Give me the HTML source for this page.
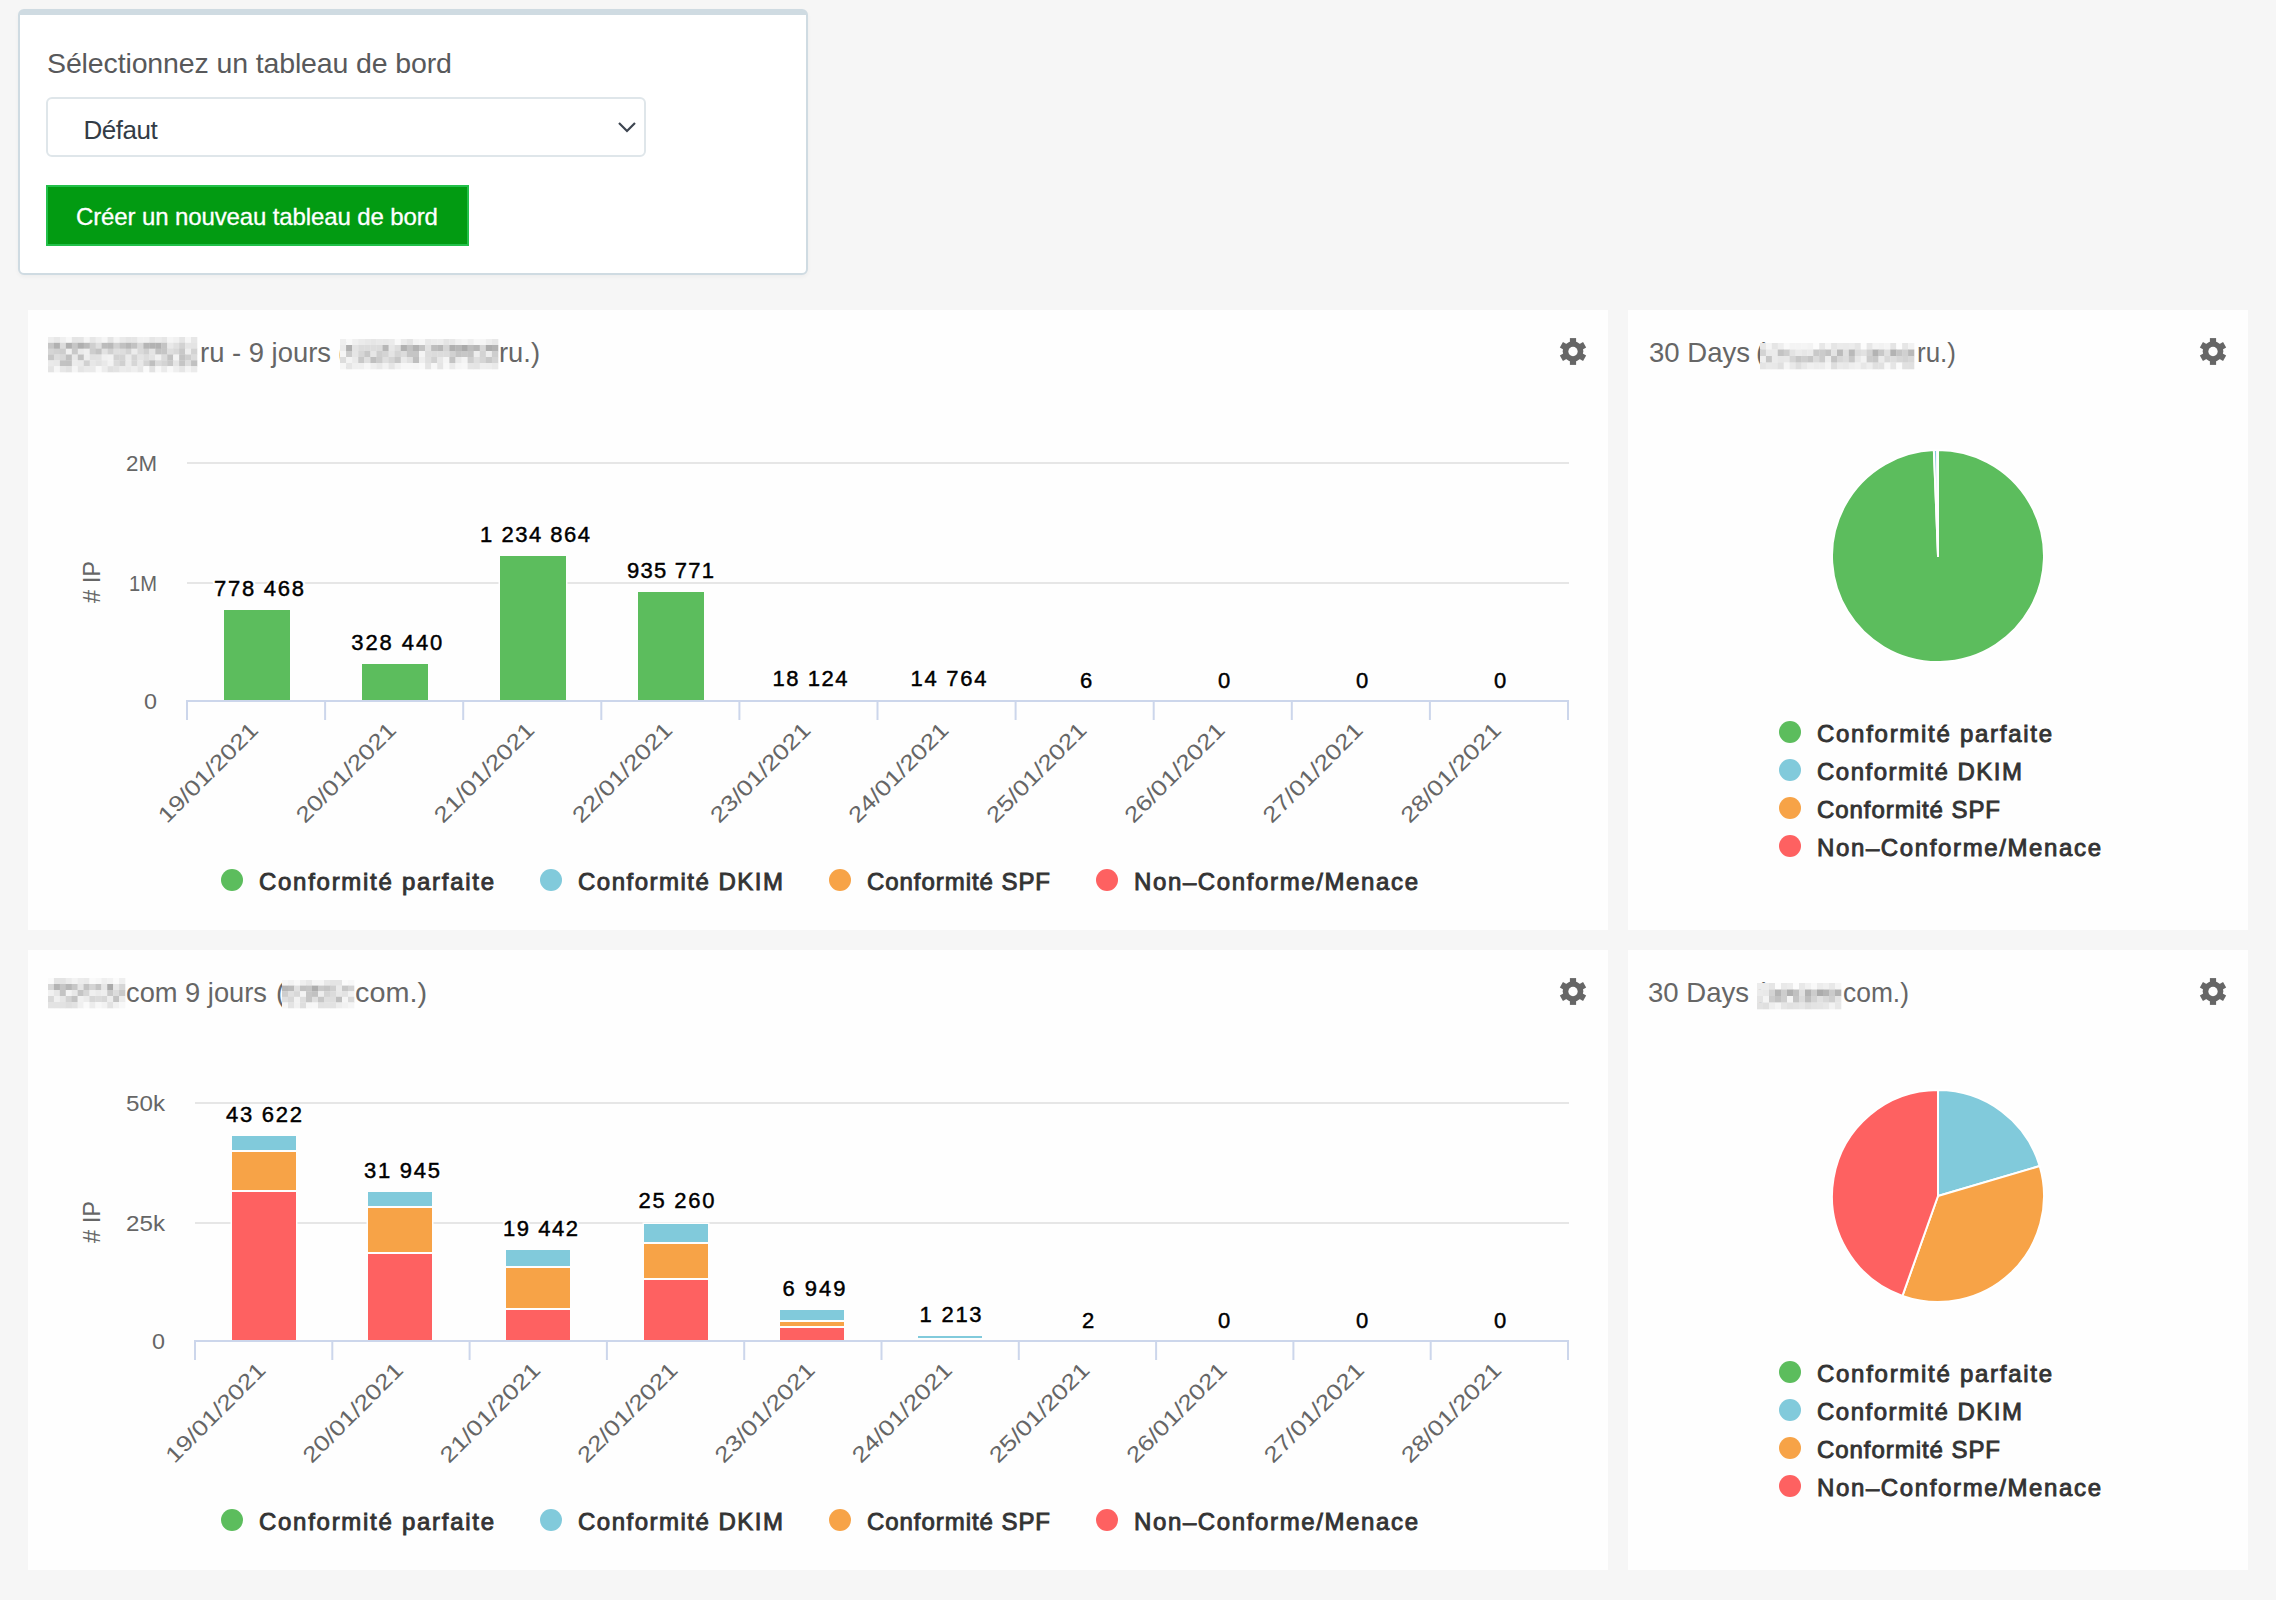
<!DOCTYPE html>
<html><head><meta charset="utf-8"><style>
html,body{margin:0;padding:0;}
body{width:2276px;height:1600px;background:#f6f6f6;position:relative;overflow:hidden;font-family:"Liberation Sans",sans-serif;}
.card{position:absolute;background:#fefefe;}
#top{position:absolute;left:18px;top:9px;width:786px;height:258px;background:#fff;border:2px solid #cfdbe2;border-top-width:6px;border-radius:6px;box-shadow:0 2px 4px rgba(0,0,0,0.04);}
#lbl{position:absolute;left:47px;top:47px;font-size:28.5px;letter-spacing:-0.13px;color:#58595b;white-space:nowrap;}
#sel{position:absolute;left:46px;top:97px;width:596px;height:56px;border:2px solid #dfe6ea;border-radius:6px;background:#fff;}
#seltxt{position:absolute;left:83.5px;top:115px;font-size:26px;letter-spacing:-0.5px;color:#333c46;white-space:nowrap;}
#btn{position:absolute;left:46px;top:185px;width:419px;height:57px;border:2px solid #23c04a;background:#029b12;}
#btntxt{position:absolute;left:76px;top:203px;font-size:24px;color:#fff;-webkit-text-stroke:0.3px #fff;letter-spacing:-0.12px;white-space:nowrap;}
svg{position:absolute;left:0;top:0;}
svg text{font-family:"Liberation Sans",sans-serif;}
</style></head><body>
<div id="top"></div>
<div id="lbl">Sélectionnez un tableau de bord</div>
<div id="sel"></div>
<div id="seltxt">Défaut</div>
<svg style="position:absolute;left:0;top:0" width="2276" height="1600"><path d="M619,123 L627,131 L635,123" fill="none" stroke="#3d4550" stroke-width="2.2"/></svg>
<div id="btn"></div>
<div id="btntxt">Créer un nouveau tableau de bord</div>
<div class="card" style="left:28px;top:310px;width:1580px;height:620px"></div>
<div class="card" style="left:1628px;top:310px;width:620px;height:620px"></div>
<div class="card" style="left:28px;top:950px;width:1580px;height:620px"></div>
<div class="card" style="left:1628px;top:950px;width:620px;height:620px"></div>
<svg width="2276" height="1600" viewBox="0 0 2276 1600">
<rect x="187.00" y="462.00" width="1382.00" height="2.00" fill="#e6e6e6"/>
<text x="157.00" y="471.00" font-size="22" fill="#666666" font-weight="400" text-anchor="end" textLength="31" lengthAdjust="spacingAndGlyphs">2M</text>
<rect x="187.00" y="582.00" width="1382.00" height="2.00" fill="#e6e6e6"/>
<text x="157.00" y="591.00" font-size="22" fill="#666666" font-weight="400" text-anchor="end" textLength="28" lengthAdjust="spacingAndGlyphs">1M</text>
<text x="157.00" y="709.00" font-size="22" fill="#666666" font-weight="400" text-anchor="end" textLength="13" lengthAdjust="spacingAndGlyphs">0</text>
<rect x="222.50" y="608.50" width="69.00" height="91.50" fill="#fefefe"/>
<rect x="224.00" y="610.00" width="66.00" height="90.00" fill="#5cbd5d"/>
<rect x="360.50" y="662.50" width="69.00" height="37.50" fill="#fefefe"/>
<rect x="362.00" y="664.00" width="66.00" height="36.00" fill="#5cbd5d"/>
<rect x="498.50" y="554.50" width="69.00" height="145.50" fill="#fefefe"/>
<rect x="500.00" y="556.00" width="66.00" height="144.00" fill="#5cbd5d"/>
<rect x="636.50" y="590.50" width="69.00" height="109.50" fill="#fefefe"/>
<rect x="638.00" y="592.00" width="66.00" height="108.00" fill="#5cbd5d"/>
<rect x="186.00" y="700.00" width="1383.00" height="2.00" fill="#ccd6eb"/>
<rect x="186.00" y="700.00" width="2.00" height="20.00" fill="#ccd6eb"/>
<rect x="324.10" y="700.00" width="2.00" height="20.00" fill="#ccd6eb"/>
<rect x="462.20" y="700.00" width="2.00" height="20.00" fill="#ccd6eb"/>
<rect x="600.30" y="700.00" width="2.00" height="20.00" fill="#ccd6eb"/>
<rect x="738.40" y="700.00" width="2.00" height="20.00" fill="#ccd6eb"/>
<rect x="876.50" y="700.00" width="2.00" height="20.00" fill="#ccd6eb"/>
<rect x="1014.60" y="700.00" width="2.00" height="20.00" fill="#ccd6eb"/>
<rect x="1152.70" y="700.00" width="2.00" height="20.00" fill="#ccd6eb"/>
<rect x="1290.80" y="700.00" width="2.00" height="20.00" fill="#ccd6eb"/>
<rect x="1428.90" y="700.00" width="2.00" height="20.00" fill="#ccd6eb"/>
<rect x="1567.00" y="700.00" width="2.00" height="20.00" fill="#ccd6eb"/>
<text x="259.00" y="595.50" font-size="22" fill="#000000" font-weight="400" text-anchor="middle" textLength="90" lengthAdjust="spacing" stroke="#ffffff" stroke-width="4.5" stroke-linejoin="round">778 468</text>
<text x="259.00" y="595.50" font-size="22" fill="#000000" font-weight="400" text-anchor="middle" textLength="90" lengthAdjust="spacing" stroke="#000000" stroke-width="0.45">778 468</text>
<text x="396.80" y="649.50" font-size="22" fill="#000000" font-weight="400" text-anchor="middle" textLength="91" lengthAdjust="spacing" stroke="#ffffff" stroke-width="4.5" stroke-linejoin="round">328 440</text>
<text x="396.80" y="649.50" font-size="22" fill="#000000" font-weight="400" text-anchor="middle" textLength="91" lengthAdjust="spacing" stroke="#000000" stroke-width="0.45">328 440</text>
<text x="535.00" y="541.50" font-size="22" fill="#000000" font-weight="400" text-anchor="middle" textLength="110" lengthAdjust="spacing" stroke="#ffffff" stroke-width="4.5" stroke-linejoin="round">1 234 864</text>
<text x="535.00" y="541.50" font-size="22" fill="#000000" font-weight="400" text-anchor="middle" textLength="110" lengthAdjust="spacing" stroke="#000000" stroke-width="0.45">1 234 864</text>
<text x="670.50" y="577.50" font-size="22" fill="#000000" font-weight="400" text-anchor="middle" textLength="87" lengthAdjust="spacing" stroke="#ffffff" stroke-width="4.5" stroke-linejoin="round">935 771</text>
<text x="670.50" y="577.50" font-size="22" fill="#000000" font-weight="400" text-anchor="middle" textLength="87" lengthAdjust="spacing" stroke="#000000" stroke-width="0.45">935 771</text>
<text x="810.00" y="686.00" font-size="22" fill="#000000" font-weight="400" text-anchor="middle" textLength="75" lengthAdjust="spacing" stroke="#ffffff" stroke-width="4.5" stroke-linejoin="round">18 124</text>
<text x="810.00" y="686.00" font-size="22" fill="#000000" font-weight="400" text-anchor="middle" textLength="75" lengthAdjust="spacing" stroke="#000000" stroke-width="0.45">18 124</text>
<text x="948.50" y="686.00" font-size="22" fill="#000000" font-weight="400" text-anchor="middle" textLength="76" lengthAdjust="spacing" stroke="#ffffff" stroke-width="4.5" stroke-linejoin="round">14 764</text>
<text x="948.50" y="686.00" font-size="22" fill="#000000" font-weight="400" text-anchor="middle" textLength="76" lengthAdjust="spacing" stroke="#000000" stroke-width="0.45">14 764</text>
<text x="1086.00" y="687.50" font-size="22" fill="#000000" font-weight="400" text-anchor="middle" textLength="12" lengthAdjust="spacing" stroke="#ffffff" stroke-width="4.5" stroke-linejoin="round">6</text>
<text x="1086.00" y="687.50" font-size="22" fill="#000000" font-weight="400" text-anchor="middle" textLength="12" lengthAdjust="spacing" stroke="#000000" stroke-width="0.45">6</text>
<text x="1224.00" y="687.50" font-size="22" fill="#000000" font-weight="400" text-anchor="middle" textLength="13" lengthAdjust="spacing" stroke="#ffffff" stroke-width="4.5" stroke-linejoin="round">0</text>
<text x="1224.00" y="687.50" font-size="22" fill="#000000" font-weight="400" text-anchor="middle" textLength="13" lengthAdjust="spacing" stroke="#000000" stroke-width="0.45">0</text>
<text x="1362.00" y="687.50" font-size="22" fill="#000000" font-weight="400" text-anchor="middle" textLength="13" lengthAdjust="spacing" stroke="#ffffff" stroke-width="4.5" stroke-linejoin="round">0</text>
<text x="1362.00" y="687.50" font-size="22" fill="#000000" font-weight="400" text-anchor="middle" textLength="13" lengthAdjust="spacing" stroke="#000000" stroke-width="0.45">0</text>
<text x="1500.00" y="687.50" font-size="22" fill="#000000" font-weight="400" text-anchor="middle" textLength="13" lengthAdjust="spacing" stroke="#ffffff" stroke-width="4.5" stroke-linejoin="round">0</text>
<text x="1500.00" y="687.50" font-size="22" fill="#000000" font-weight="400" text-anchor="middle" textLength="13" lengthAdjust="spacing" stroke="#000000" stroke-width="0.45">0</text>
<text x="0" y="0" transform="translate(259.55,731.50) rotate(-45)" font-size="22" fill="#666666" text-anchor="end" textLength="131" lengthAdjust="spacingAndGlyphs">19/01/2021</text>
<text x="0" y="0" transform="translate(397.65,731.50) rotate(-45)" font-size="22" fill="#666666" text-anchor="end" textLength="131" lengthAdjust="spacingAndGlyphs">20/01/2021</text>
<text x="0" y="0" transform="translate(535.75,731.50) rotate(-45)" font-size="22" fill="#666666" text-anchor="end" textLength="131" lengthAdjust="spacingAndGlyphs">21/01/2021</text>
<text x="0" y="0" transform="translate(673.85,731.50) rotate(-45)" font-size="22" fill="#666666" text-anchor="end" textLength="131" lengthAdjust="spacingAndGlyphs">22/01/2021</text>
<text x="0" y="0" transform="translate(811.95,731.50) rotate(-45)" font-size="22" fill="#666666" text-anchor="end" textLength="131" lengthAdjust="spacingAndGlyphs">23/01/2021</text>
<text x="0" y="0" transform="translate(950.05,731.50) rotate(-45)" font-size="22" fill="#666666" text-anchor="end" textLength="131" lengthAdjust="spacingAndGlyphs">24/01/2021</text>
<text x="0" y="0" transform="translate(1088.15,731.50) rotate(-45)" font-size="22" fill="#666666" text-anchor="end" textLength="131" lengthAdjust="spacingAndGlyphs">25/01/2021</text>
<text x="0" y="0" transform="translate(1226.25,731.50) rotate(-45)" font-size="22" fill="#666666" text-anchor="end" textLength="131" lengthAdjust="spacingAndGlyphs">26/01/2021</text>
<text x="0" y="0" transform="translate(1364.35,731.50) rotate(-45)" font-size="22" fill="#666666" text-anchor="end" textLength="131" lengthAdjust="spacingAndGlyphs">27/01/2021</text>
<text x="0" y="0" transform="translate(1502.45,731.50) rotate(-45)" font-size="22" fill="#666666" text-anchor="end" textLength="131" lengthAdjust="spacingAndGlyphs">28/01/2021</text>
<text x="0" y="0" transform="translate(100,582) rotate(-90)" font-size="24" fill="#666666" text-anchor="middle" textLength="42" lengthAdjust="spacingAndGlyphs"># IP</text>
<circle cx="232" cy="880" r="11" fill="#5cbd5d"/>
<text x="259.00" y="890.00" font-size="24" fill="#333333" font-weight="400" text-anchor="start" textLength="235" lengthAdjust="spacing" stroke="#333333" stroke-width="0.9">Conformité parfaite</text>
<circle cx="551" cy="880" r="11" fill="#81cadb"/>
<text x="578.00" y="890.00" font-size="24" fill="#333333" font-weight="400" text-anchor="start" textLength="205" lengthAdjust="spacing" stroke="#333333" stroke-width="0.9">Conformité DKIM</text>
<circle cx="840" cy="880" r="11" fill="#f7a347"/>
<text x="867.00" y="890.00" font-size="24" fill="#333333" font-weight="400" text-anchor="start" textLength="183" lengthAdjust="spacing" stroke="#333333" stroke-width="0.9">Conformité SPF</text>
<circle cx="1107" cy="880" r="11" fill="#fe6161"/>
<text x="1134.00" y="890.00" font-size="24" fill="#333333" font-weight="400" text-anchor="start" textLength="284" lengthAdjust="spacing" stroke="#333333" stroke-width="0.9">Non–Conforme/Menace</text>
<rect x="195.00" y="1102.00" width="1374.00" height="2.00" fill="#e6e6e6"/>
<text x="165.00" y="1111.00" font-size="22" fill="#666666" font-weight="400" text-anchor="end" textLength="39" lengthAdjust="spacingAndGlyphs">50k</text>
<rect x="195.00" y="1222.00" width="1374.00" height="2.00" fill="#e6e6e6"/>
<text x="165.00" y="1231.00" font-size="22" fill="#666666" font-weight="400" text-anchor="end" textLength="39" lengthAdjust="spacingAndGlyphs">25k</text>
<text x="165.00" y="1349.00" font-size="22" fill="#666666" font-weight="400" text-anchor="end" textLength="13" lengthAdjust="spacingAndGlyphs">0</text>
<rect x="230.50" y="1134.50" width="67.00" height="205.50" fill="#fefefe"/>
<rect x="232.00" y="1136.00" width="64.00" height="14.00" fill="#81cadb"/>
<rect x="232.00" y="1152.00" width="64.00" height="38.00" fill="#f7a347"/>
<rect x="232.00" y="1192.00" width="64.00" height="148.00" fill="#fe6161"/>
<rect x="366.50" y="1190.50" width="67.00" height="149.50" fill="#fefefe"/>
<rect x="368.00" y="1192.00" width="64.00" height="14.00" fill="#81cadb"/>
<rect x="368.00" y="1208.00" width="64.00" height="44.00" fill="#f7a347"/>
<rect x="368.00" y="1254.00" width="64.00" height="86.00" fill="#fe6161"/>
<rect x="504.50" y="1248.50" width="67.00" height="91.50" fill="#fefefe"/>
<rect x="506.00" y="1250.00" width="64.00" height="16.00" fill="#81cadb"/>
<rect x="506.00" y="1268.00" width="64.00" height="40.00" fill="#f7a347"/>
<rect x="506.00" y="1310.00" width="64.00" height="30.00" fill="#fe6161"/>
<rect x="642.50" y="1222.50" width="67.00" height="117.50" fill="#fefefe"/>
<rect x="644.00" y="1224.00" width="64.00" height="18.00" fill="#81cadb"/>
<rect x="644.00" y="1244.00" width="64.00" height="34.00" fill="#f7a347"/>
<rect x="644.00" y="1280.00" width="64.00" height="60.00" fill="#fe6161"/>
<rect x="778.50" y="1308.50" width="67.00" height="31.50" fill="#fefefe"/>
<rect x="780.00" y="1310.00" width="64.00" height="10.00" fill="#81cadb"/>
<rect x="780.00" y="1322.00" width="64.00" height="4.00" fill="#f7a347"/>
<rect x="780.00" y="1328.00" width="64.00" height="12.00" fill="#fe6161"/>
<rect x="916.50" y="1334.50" width="67.00" height="5.50" fill="#fefefe"/>
<rect x="918.00" y="1336.00" width="64.00" height="2.00" fill="#81cadb"/>
<rect x="194.00" y="1340.00" width="1375.00" height="2.00" fill="#ccd6eb"/>
<rect x="194.00" y="1340.00" width="2.00" height="20.00" fill="#ccd6eb"/>
<rect x="331.30" y="1340.00" width="2.00" height="20.00" fill="#ccd6eb"/>
<rect x="468.60" y="1340.00" width="2.00" height="20.00" fill="#ccd6eb"/>
<rect x="605.90" y="1340.00" width="2.00" height="20.00" fill="#ccd6eb"/>
<rect x="743.20" y="1340.00" width="2.00" height="20.00" fill="#ccd6eb"/>
<rect x="880.50" y="1340.00" width="2.00" height="20.00" fill="#ccd6eb"/>
<rect x="1017.80" y="1340.00" width="2.00" height="20.00" fill="#ccd6eb"/>
<rect x="1155.10" y="1340.00" width="2.00" height="20.00" fill="#ccd6eb"/>
<rect x="1292.40" y="1340.00" width="2.00" height="20.00" fill="#ccd6eb"/>
<rect x="1429.70" y="1340.00" width="2.00" height="20.00" fill="#ccd6eb"/>
<rect x="1567.00" y="1340.00" width="2.00" height="20.00" fill="#ccd6eb"/>
<text x="264.00" y="1122.00" font-size="22" fill="#000000" font-weight="400" text-anchor="middle" textLength="76" lengthAdjust="spacing" stroke="#ffffff" stroke-width="4.5" stroke-linejoin="round">43 622</text>
<text x="264.00" y="1122.00" font-size="22" fill="#000000" font-weight="400" text-anchor="middle" textLength="76" lengthAdjust="spacing" stroke="#000000" stroke-width="0.45">43 622</text>
<text x="402.00" y="1178.00" font-size="22" fill="#000000" font-weight="400" text-anchor="middle" textLength="76" lengthAdjust="spacing" stroke="#ffffff" stroke-width="4.5" stroke-linejoin="round">31 945</text>
<text x="402.00" y="1178.00" font-size="22" fill="#000000" font-weight="400" text-anchor="middle" textLength="76" lengthAdjust="spacing" stroke="#000000" stroke-width="0.45">31 945</text>
<text x="540.50" y="1236.00" font-size="22" fill="#000000" font-weight="400" text-anchor="middle" textLength="75" lengthAdjust="spacing" stroke="#ffffff" stroke-width="4.5" stroke-linejoin="round">19 442</text>
<text x="540.50" y="1236.00" font-size="22" fill="#000000" font-weight="400" text-anchor="middle" textLength="75" lengthAdjust="spacing" stroke="#000000" stroke-width="0.45">19 442</text>
<text x="676.50" y="1208.00" font-size="22" fill="#000000" font-weight="400" text-anchor="middle" textLength="76" lengthAdjust="spacing" stroke="#ffffff" stroke-width="4.5" stroke-linejoin="round">25 260</text>
<text x="676.50" y="1208.00" font-size="22" fill="#000000" font-weight="400" text-anchor="middle" textLength="76" lengthAdjust="spacing" stroke="#000000" stroke-width="0.45">25 260</text>
<text x="814.00" y="1295.50" font-size="22" fill="#000000" font-weight="400" text-anchor="middle" textLength="63" lengthAdjust="spacing" stroke="#ffffff" stroke-width="4.5" stroke-linejoin="round">6 949</text>
<text x="814.00" y="1295.50" font-size="22" fill="#000000" font-weight="400" text-anchor="middle" textLength="63" lengthAdjust="spacing" stroke="#000000" stroke-width="0.45">6 949</text>
<text x="950.60" y="1321.50" font-size="22" fill="#000000" font-weight="400" text-anchor="middle" textLength="62" lengthAdjust="spacing" stroke="#ffffff" stroke-width="4.5" stroke-linejoin="round">1 213</text>
<text x="950.60" y="1321.50" font-size="22" fill="#000000" font-weight="400" text-anchor="middle" textLength="62" lengthAdjust="spacing" stroke="#000000" stroke-width="0.45">1 213</text>
<text x="1088.00" y="1328.00" font-size="22" fill="#000000" font-weight="400" text-anchor="middle" textLength="13" lengthAdjust="spacing" stroke="#ffffff" stroke-width="4.5" stroke-linejoin="round">2</text>
<text x="1088.00" y="1328.00" font-size="22" fill="#000000" font-weight="400" text-anchor="middle" textLength="13" lengthAdjust="spacing" stroke="#000000" stroke-width="0.45">2</text>
<text x="1224.00" y="1328.00" font-size="22" fill="#000000" font-weight="400" text-anchor="middle" textLength="13" lengthAdjust="spacing" stroke="#ffffff" stroke-width="4.5" stroke-linejoin="round">0</text>
<text x="1224.00" y="1328.00" font-size="22" fill="#000000" font-weight="400" text-anchor="middle" textLength="13" lengthAdjust="spacing" stroke="#000000" stroke-width="0.45">0</text>
<text x="1362.00" y="1328.00" font-size="22" fill="#000000" font-weight="400" text-anchor="middle" textLength="13" lengthAdjust="spacing" stroke="#ffffff" stroke-width="4.5" stroke-linejoin="round">0</text>
<text x="1362.00" y="1328.00" font-size="22" fill="#000000" font-weight="400" text-anchor="middle" textLength="13" lengthAdjust="spacing" stroke="#000000" stroke-width="0.45">0</text>
<text x="1500.00" y="1328.00" font-size="22" fill="#000000" font-weight="400" text-anchor="middle" textLength="13" lengthAdjust="spacing" stroke="#ffffff" stroke-width="4.5" stroke-linejoin="round">0</text>
<text x="1500.00" y="1328.00" font-size="22" fill="#000000" font-weight="400" text-anchor="middle" textLength="13" lengthAdjust="spacing" stroke="#000000" stroke-width="0.45">0</text>
<text x="0" y="0" transform="translate(267.15,1371.50) rotate(-45)" font-size="22" fill="#666666" text-anchor="end" textLength="131" lengthAdjust="spacingAndGlyphs">19/01/2021</text>
<text x="0" y="0" transform="translate(404.45,1371.50) rotate(-45)" font-size="22" fill="#666666" text-anchor="end" textLength="131" lengthAdjust="spacingAndGlyphs">20/01/2021</text>
<text x="0" y="0" transform="translate(541.75,1371.50) rotate(-45)" font-size="22" fill="#666666" text-anchor="end" textLength="131" lengthAdjust="spacingAndGlyphs">21/01/2021</text>
<text x="0" y="0" transform="translate(679.05,1371.50) rotate(-45)" font-size="22" fill="#666666" text-anchor="end" textLength="131" lengthAdjust="spacingAndGlyphs">22/01/2021</text>
<text x="0" y="0" transform="translate(816.35,1371.50) rotate(-45)" font-size="22" fill="#666666" text-anchor="end" textLength="131" lengthAdjust="spacingAndGlyphs">23/01/2021</text>
<text x="0" y="0" transform="translate(953.65,1371.50) rotate(-45)" font-size="22" fill="#666666" text-anchor="end" textLength="131" lengthAdjust="spacingAndGlyphs">24/01/2021</text>
<text x="0" y="0" transform="translate(1090.95,1371.50) rotate(-45)" font-size="22" fill="#666666" text-anchor="end" textLength="131" lengthAdjust="spacingAndGlyphs">25/01/2021</text>
<text x="0" y="0" transform="translate(1228.25,1371.50) rotate(-45)" font-size="22" fill="#666666" text-anchor="end" textLength="131" lengthAdjust="spacingAndGlyphs">26/01/2021</text>
<text x="0" y="0" transform="translate(1365.55,1371.50) rotate(-45)" font-size="22" fill="#666666" text-anchor="end" textLength="131" lengthAdjust="spacingAndGlyphs">27/01/2021</text>
<text x="0" y="0" transform="translate(1502.85,1371.50) rotate(-45)" font-size="22" fill="#666666" text-anchor="end" textLength="131" lengthAdjust="spacingAndGlyphs">28/01/2021</text>
<text x="0" y="0" transform="translate(100,1222) rotate(-90)" font-size="24" fill="#666666" text-anchor="middle" textLength="42" lengthAdjust="spacingAndGlyphs"># IP</text>
<circle cx="232" cy="1520" r="11" fill="#5cbd5d"/>
<text x="259.00" y="1530.00" font-size="24" fill="#333333" font-weight="400" text-anchor="start" textLength="235" lengthAdjust="spacing" stroke="#333333" stroke-width="0.9">Conformité parfaite</text>
<circle cx="551" cy="1520" r="11" fill="#81cadb"/>
<text x="578.00" y="1530.00" font-size="24" fill="#333333" font-weight="400" text-anchor="start" textLength="205" lengthAdjust="spacing" stroke="#333333" stroke-width="0.9">Conformité DKIM</text>
<circle cx="840" cy="1520" r="11" fill="#f7a347"/>
<text x="867.00" y="1530.00" font-size="24" fill="#333333" font-weight="400" text-anchor="start" textLength="183" lengthAdjust="spacing" stroke="#333333" stroke-width="0.9">Conformité SPF</text>
<circle cx="1107" cy="1520" r="11" fill="#fe6161"/>
<text x="1134.00" y="1530.00" font-size="24" fill="#333333" font-weight="400" text-anchor="start" textLength="284" lengthAdjust="spacing" stroke="#333333" stroke-width="0.9">Non–Conforme/Menace</text>
<path d="M1938,556 L1938.00,450.00 A106,106 0 1 1 1933.87,450.08 Z" fill="#5cbd5d" stroke="#ffffff" stroke-width="2" stroke-linejoin="round"/>
<path d="M1938,556 L1933.87,450.08 A106,106 0 0 1 1937.33,450.00 Z" fill="#81cadb" stroke="#ffffff" stroke-width="2" stroke-linejoin="round"/>
<path d="M1938,556 L1937.33,450.00 A106,106 0 0 1 1937.67,450.00 Z" fill="#f7a347" stroke="#ffffff" stroke-width="2" stroke-linejoin="round"/>
<path d="M1938,556 L1937.67,450.00 A106,106 0 0 1 1938.00,450.00 Z" fill="#fe6161" stroke="#ffffff" stroke-width="2" stroke-linejoin="round"/>
<path d="M1938,1196 L1938.00,1090.00 A106,106 0 0 1 2039.69,1166.07 Z" fill="#81cadb" stroke="#ffffff" stroke-width="2" stroke-linejoin="round"/>
<path d="M1938,1196 L2039.69,1166.07 A106,106 0 0 1 1902.44,1295.86 Z" fill="#f7a347" stroke="#ffffff" stroke-width="2" stroke-linejoin="round"/>
<path d="M1938,1196 L1902.44,1295.86 A106,106 0 0 1 1938.00,1090.00 Z" fill="#fe6161" stroke="#ffffff" stroke-width="2" stroke-linejoin="round"/>
<circle cx="1790" cy="732" r="11" fill="#5cbd5d"/>
<text x="1817.00" y="742.00" font-size="24" fill="#333333" font-weight="400" text-anchor="start" textLength="235" lengthAdjust="spacing" stroke="#333333" stroke-width="0.9">Conformité parfaite</text>
<circle cx="1790" cy="770" r="11" fill="#81cadb"/>
<text x="1817.00" y="780.00" font-size="24" fill="#333333" font-weight="400" text-anchor="start" textLength="205" lengthAdjust="spacing" stroke="#333333" stroke-width="0.9">Conformité DKIM</text>
<circle cx="1790" cy="808" r="11" fill="#f7a347"/>
<text x="1817.00" y="818.00" font-size="24" fill="#333333" font-weight="400" text-anchor="start" textLength="183" lengthAdjust="spacing" stroke="#333333" stroke-width="0.9">Conformité SPF</text>
<circle cx="1790" cy="846" r="11" fill="#fe6161"/>
<text x="1817.00" y="856.00" font-size="24" fill="#333333" font-weight="400" text-anchor="start" textLength="284" lengthAdjust="spacing" stroke="#333333" stroke-width="0.9">Non–Conforme/Menace</text>
<circle cx="1790" cy="1372" r="11" fill="#5cbd5d"/>
<text x="1817.00" y="1382.00" font-size="24" fill="#333333" font-weight="400" text-anchor="start" textLength="235" lengthAdjust="spacing" stroke="#333333" stroke-width="0.9">Conformité parfaite</text>
<circle cx="1790" cy="1410" r="11" fill="#81cadb"/>
<text x="1817.00" y="1420.00" font-size="24" fill="#333333" font-weight="400" text-anchor="start" textLength="205" lengthAdjust="spacing" stroke="#333333" stroke-width="0.9">Conformité DKIM</text>
<circle cx="1790" cy="1448" r="11" fill="#f7a347"/>
<text x="1817.00" y="1458.00" font-size="24" fill="#333333" font-weight="400" text-anchor="start" textLength="183" lengthAdjust="spacing" stroke="#333333" stroke-width="0.9">Conformité SPF</text>
<circle cx="1790" cy="1486" r="11" fill="#fe6161"/>
<text x="1817.00" y="1496.00" font-size="24" fill="#333333" font-weight="400" text-anchor="start" textLength="284" lengthAdjust="spacing" stroke="#333333" stroke-width="0.9">Non–Conforme/Menace</text>
<g><circle cx="1573" cy="351.5" r="10.3" fill="#666"/><rect x="1569.90" y="338.10" width="6.2" height="13.4" fill="#666" transform="rotate(0,1573,351.5)"/><rect x="1569.90" y="338.10" width="6.2" height="13.4" fill="#666" transform="rotate(60,1573,351.5)"/><rect x="1569.90" y="338.10" width="6.2" height="13.4" fill="#666" transform="rotate(120,1573,351.5)"/><rect x="1569.90" y="338.10" width="6.2" height="13.4" fill="#666" transform="rotate(180,1573,351.5)"/><rect x="1569.90" y="338.10" width="6.2" height="13.4" fill="#666" transform="rotate(240,1573,351.5)"/><rect x="1569.90" y="338.10" width="6.2" height="13.4" fill="#666" transform="rotate(300,1573,351.5)"/><circle cx="1573" cy="351.5" r="4.65" fill="#fefefe"/></g>
<g><circle cx="2213" cy="351.5" r="10.3" fill="#666"/><rect x="2209.90" y="338.10" width="6.2" height="13.4" fill="#666" transform="rotate(0,2213,351.5)"/><rect x="2209.90" y="338.10" width="6.2" height="13.4" fill="#666" transform="rotate(60,2213,351.5)"/><rect x="2209.90" y="338.10" width="6.2" height="13.4" fill="#666" transform="rotate(120,2213,351.5)"/><rect x="2209.90" y="338.10" width="6.2" height="13.4" fill="#666" transform="rotate(180,2213,351.5)"/><rect x="2209.90" y="338.10" width="6.2" height="13.4" fill="#666" transform="rotate(240,2213,351.5)"/><rect x="2209.90" y="338.10" width="6.2" height="13.4" fill="#666" transform="rotate(300,2213,351.5)"/><circle cx="2213" cy="351.5" r="4.65" fill="#fefefe"/></g>
<g><circle cx="1573" cy="991.5" r="10.3" fill="#666"/><rect x="1569.90" y="978.10" width="6.2" height="13.4" fill="#666" transform="rotate(0,1573,991.5)"/><rect x="1569.90" y="978.10" width="6.2" height="13.4" fill="#666" transform="rotate(60,1573,991.5)"/><rect x="1569.90" y="978.10" width="6.2" height="13.4" fill="#666" transform="rotate(120,1573,991.5)"/><rect x="1569.90" y="978.10" width="6.2" height="13.4" fill="#666" transform="rotate(180,1573,991.5)"/><rect x="1569.90" y="978.10" width="6.2" height="13.4" fill="#666" transform="rotate(240,1573,991.5)"/><rect x="1569.90" y="978.10" width="6.2" height="13.4" fill="#666" transform="rotate(300,1573,991.5)"/><circle cx="1573" cy="991.5" r="4.65" fill="#fefefe"/></g>
<g><circle cx="2213" cy="991.5" r="10.3" fill="#666"/><rect x="2209.90" y="978.10" width="6.2" height="13.4" fill="#666" transform="rotate(0,2213,991.5)"/><rect x="2209.90" y="978.10" width="6.2" height="13.4" fill="#666" transform="rotate(60,2213,991.5)"/><rect x="2209.90" y="978.10" width="6.2" height="13.4" fill="#666" transform="rotate(120,2213,991.5)"/><rect x="2209.90" y="978.10" width="6.2" height="13.4" fill="#666" transform="rotate(180,2213,991.5)"/><rect x="2209.90" y="978.10" width="6.2" height="13.4" fill="#666" transform="rotate(240,2213,991.5)"/><rect x="2209.90" y="978.10" width="6.2" height="13.4" fill="#666" transform="rotate(300,2213,991.5)"/><circle cx="2213" cy="991.5" r="4.65" fill="#fefefe"/></g>
<rect x="48.00" y="337.00" width="6.26" height="6.13" fill="rgb(238,238,238)"/>
<rect x="53.96" y="337.00" width="6.26" height="6.13" fill="rgb(232,232,232)"/>
<rect x="59.92" y="337.00" width="6.26" height="6.13" fill="rgb(240,240,240)"/>
<rect x="65.88" y="337.00" width="6.26" height="6.13" fill="rgb(248,248,248)"/>
<rect x="71.84" y="337.00" width="6.26" height="6.13" fill="rgb(229,229,229)"/>
<rect x="77.80" y="337.00" width="6.26" height="6.13" fill="rgb(230,230,230)"/>
<rect x="83.76" y="337.00" width="6.26" height="6.13" fill="rgb(245,245,245)"/>
<rect x="89.72" y="337.00" width="6.26" height="6.13" fill="rgb(231,231,231)"/>
<rect x="95.68" y="337.00" width="6.26" height="6.13" fill="rgb(239,239,239)"/>
<rect x="101.64" y="337.00" width="6.26" height="6.13" fill="rgb(246,246,246)"/>
<rect x="107.60" y="337.00" width="6.26" height="6.13" fill="rgb(229,229,229)"/>
<rect x="113.56" y="337.00" width="6.26" height="6.13" fill="rgb(244,244,244)"/>
<rect x="119.52" y="337.00" width="6.26" height="6.13" fill="rgb(234,234,234)"/>
<rect x="125.48" y="337.00" width="6.26" height="6.13" fill="rgb(229,229,229)"/>
<rect x="131.44" y="337.00" width="6.26" height="6.13" fill="rgb(230,230,230)"/>
<rect x="137.40" y="337.00" width="6.26" height="6.13" fill="rgb(241,241,241)"/>
<rect x="143.36" y="337.00" width="6.26" height="6.13" fill="rgb(241,241,241)"/>
<rect x="149.32" y="337.00" width="6.26" height="6.13" fill="rgb(230,230,230)"/>
<rect x="155.28" y="337.00" width="6.26" height="6.13" fill="rgb(235,235,235)"/>
<rect x="161.24" y="337.00" width="6.26" height="6.13" fill="rgb(230,230,230)"/>
<rect x="167.20" y="337.00" width="6.26" height="6.13" fill="rgb(245,245,245)"/>
<rect x="173.16" y="337.00" width="6.26" height="6.13" fill="rgb(241,241,241)"/>
<rect x="179.12" y="337.00" width="6.26" height="6.13" fill="rgb(229,229,229)"/>
<rect x="185.08" y="337.00" width="6.26" height="6.13" fill="rgb(246,246,246)"/>
<rect x="191.04" y="337.00" width="6.26" height="6.13" fill="rgb(231,231,231)"/>
<rect x="48.00" y="342.83" width="6.26" height="6.13" fill="rgb(198,198,198)"/>
<rect x="53.96" y="342.83" width="6.26" height="6.13" fill="rgb(177,177,177)"/>
<rect x="59.92" y="342.83" width="6.26" height="6.13" fill="rgb(220,220,220)"/>
<rect x="65.88" y="342.83" width="6.26" height="6.13" fill="rgb(176,176,176)"/>
<rect x="71.84" y="342.83" width="6.26" height="6.13" fill="rgb(198,198,198)"/>
<rect x="77.80" y="342.83" width="6.26" height="6.13" fill="rgb(175,175,175)"/>
<rect x="83.76" y="342.83" width="6.26" height="6.13" fill="rgb(187,187,187)"/>
<rect x="89.72" y="342.83" width="6.26" height="6.13" fill="rgb(207,207,207)"/>
<rect x="95.68" y="342.83" width="6.26" height="6.13" fill="rgb(223,223,223)"/>
<rect x="101.64" y="342.83" width="6.26" height="6.13" fill="rgb(188,188,188)"/>
<rect x="107.60" y="342.83" width="6.26" height="6.13" fill="rgb(185,185,185)"/>
<rect x="113.56" y="342.83" width="6.26" height="6.13" fill="rgb(209,209,209)"/>
<rect x="119.52" y="342.83" width="6.26" height="6.13" fill="rgb(193,193,193)"/>
<rect x="125.48" y="342.83" width="6.26" height="6.13" fill="rgb(183,183,183)"/>
<rect x="131.44" y="342.83" width="6.26" height="6.13" fill="rgb(194,194,194)"/>
<rect x="137.40" y="342.83" width="6.26" height="6.13" fill="rgb(217,217,217)"/>
<rect x="143.36" y="342.83" width="6.26" height="6.13" fill="rgb(182,182,182)"/>
<rect x="149.32" y="342.83" width="6.26" height="6.13" fill="rgb(178,178,178)"/>
<rect x="155.28" y="342.83" width="6.26" height="6.13" fill="rgb(177,177,177)"/>
<rect x="161.24" y="342.83" width="6.26" height="6.13" fill="rgb(196,196,196)"/>
<rect x="167.20" y="342.83" width="6.26" height="6.13" fill="rgb(233,233,233)"/>
<rect x="173.16" y="342.83" width="6.26" height="6.13" fill="rgb(224,224,224)"/>
<rect x="179.12" y="342.83" width="6.26" height="6.13" fill="rgb(210,210,210)"/>
<rect x="185.08" y="342.83" width="6.26" height="6.13" fill="rgb(229,229,229)"/>
<rect x="191.04" y="342.83" width="6.26" height="6.13" fill="rgb(228,228,228)"/>
<rect x="48.00" y="348.67" width="6.26" height="6.13" fill="rgb(213,213,213)"/>
<rect x="53.96" y="348.67" width="6.26" height="6.13" fill="rgb(209,209,209)"/>
<rect x="59.92" y="348.67" width="6.26" height="6.13" fill="rgb(205,205,205)"/>
<rect x="65.88" y="348.67" width="6.26" height="6.13" fill="rgb(240,240,240)"/>
<rect x="71.84" y="348.67" width="6.26" height="6.13" fill="rgb(201,201,201)"/>
<rect x="77.80" y="348.67" width="6.26" height="6.13" fill="rgb(234,234,234)"/>
<rect x="83.76" y="348.67" width="6.26" height="6.13" fill="rgb(239,239,239)"/>
<rect x="89.72" y="348.67" width="6.26" height="6.13" fill="rgb(205,205,205)"/>
<rect x="95.68" y="348.67" width="6.26" height="6.13" fill="rgb(195,195,195)"/>
<rect x="101.64" y="348.67" width="6.26" height="6.13" fill="rgb(226,226,226)"/>
<rect x="107.60" y="348.67" width="6.26" height="6.13" fill="rgb(209,209,209)"/>
<rect x="113.56" y="348.67" width="6.26" height="6.13" fill="rgb(223,223,223)"/>
<rect x="119.52" y="348.67" width="6.26" height="6.13" fill="rgb(221,221,221)"/>
<rect x="125.48" y="348.67" width="6.26" height="6.13" fill="rgb(211,211,211)"/>
<rect x="131.44" y="348.67" width="6.26" height="6.13" fill="rgb(236,236,236)"/>
<rect x="137.40" y="348.67" width="6.26" height="6.13" fill="rgb(218,218,218)"/>
<rect x="143.36" y="348.67" width="6.26" height="6.13" fill="rgb(208,208,208)"/>
<rect x="149.32" y="348.67" width="6.26" height="6.13" fill="rgb(228,228,228)"/>
<rect x="155.28" y="348.67" width="6.26" height="6.13" fill="rgb(194,194,194)"/>
<rect x="161.24" y="348.67" width="6.26" height="6.13" fill="rgb(197,197,197)"/>
<rect x="167.20" y="348.67" width="6.26" height="6.13" fill="rgb(222,222,222)"/>
<rect x="173.16" y="348.67" width="6.26" height="6.13" fill="rgb(216,216,216)"/>
<rect x="179.12" y="348.67" width="6.26" height="6.13" fill="rgb(200,200,200)"/>
<rect x="185.08" y="348.67" width="6.26" height="6.13" fill="rgb(238,238,238)"/>
<rect x="191.04" y="348.67" width="6.26" height="6.13" fill="rgb(211,211,211)"/>
<rect x="48.00" y="354.50" width="6.26" height="6.13" fill="rgb(199,199,199)"/>
<rect x="53.96" y="354.50" width="6.26" height="6.13" fill="rgb(221,221,221)"/>
<rect x="59.92" y="354.50" width="6.26" height="6.13" fill="rgb(216,216,216)"/>
<rect x="65.88" y="354.50" width="6.26" height="6.13" fill="rgb(192,192,192)"/>
<rect x="71.84" y="354.50" width="6.26" height="6.13" fill="rgb(232,232,232)"/>
<rect x="77.80" y="354.50" width="6.26" height="6.13" fill="rgb(194,194,194)"/>
<rect x="83.76" y="354.50" width="6.26" height="6.13" fill="rgb(238,238,238)"/>
<rect x="89.72" y="354.50" width="6.26" height="6.13" fill="rgb(225,225,225)"/>
<rect x="95.68" y="354.50" width="6.26" height="6.13" fill="rgb(226,226,226)"/>
<rect x="101.64" y="354.50" width="6.26" height="6.13" fill="rgb(240,240,240)"/>
<rect x="107.60" y="354.50" width="6.26" height="6.13" fill="rgb(242,242,242)"/>
<rect x="113.56" y="354.50" width="6.26" height="6.13" fill="rgb(210,210,210)"/>
<rect x="119.52" y="354.50" width="6.26" height="6.13" fill="rgb(211,211,211)"/>
<rect x="125.48" y="354.50" width="6.26" height="6.13" fill="rgb(234,234,234)"/>
<rect x="131.44" y="354.50" width="6.26" height="6.13" fill="rgb(212,212,212)"/>
<rect x="137.40" y="354.50" width="6.26" height="6.13" fill="rgb(228,228,228)"/>
<rect x="143.36" y="354.50" width="6.26" height="6.13" fill="rgb(221,221,221)"/>
<rect x="149.32" y="354.50" width="6.26" height="6.13" fill="rgb(227,227,227)"/>
<rect x="155.28" y="354.50" width="6.26" height="6.13" fill="rgb(241,241,241)"/>
<rect x="161.24" y="354.50" width="6.26" height="6.13" fill="rgb(219,219,219)"/>
<rect x="167.20" y="354.50" width="6.26" height="6.13" fill="rgb(194,194,194)"/>
<rect x="173.16" y="354.50" width="6.26" height="6.13" fill="rgb(243,243,243)"/>
<rect x="179.12" y="354.50" width="6.26" height="6.13" fill="rgb(195,195,195)"/>
<rect x="185.08" y="354.50" width="6.26" height="6.13" fill="rgb(207,207,207)"/>
<rect x="191.04" y="354.50" width="6.26" height="6.13" fill="rgb(220,220,220)"/>
<rect x="48.00" y="360.33" width="6.26" height="6.13" fill="rgb(234,234,234)"/>
<rect x="53.96" y="360.33" width="6.26" height="6.13" fill="rgb(232,232,232)"/>
<rect x="59.92" y="360.33" width="6.26" height="6.13" fill="rgb(194,194,194)"/>
<rect x="65.88" y="360.33" width="6.26" height="6.13" fill="rgb(193,193,193)"/>
<rect x="71.84" y="360.33" width="6.26" height="6.13" fill="rgb(236,236,236)"/>
<rect x="77.80" y="360.33" width="6.26" height="6.13" fill="rgb(234,234,234)"/>
<rect x="83.76" y="360.33" width="6.26" height="6.13" fill="rgb(209,209,209)"/>
<rect x="89.72" y="360.33" width="6.26" height="6.13" fill="rgb(231,231,231)"/>
<rect x="95.68" y="360.33" width="6.26" height="6.13" fill="rgb(226,226,226)"/>
<rect x="101.64" y="360.33" width="6.26" height="6.13" fill="rgb(233,233,233)"/>
<rect x="107.60" y="360.33" width="6.26" height="6.13" fill="rgb(242,242,242)"/>
<rect x="113.56" y="360.33" width="6.26" height="6.13" fill="rgb(218,218,218)"/>
<rect x="119.52" y="360.33" width="6.26" height="6.13" fill="rgb(208,208,208)"/>
<rect x="125.48" y="360.33" width="6.26" height="6.13" fill="rgb(235,235,235)"/>
<rect x="131.44" y="360.33" width="6.26" height="6.13" fill="rgb(214,214,214)"/>
<rect x="137.40" y="360.33" width="6.26" height="6.13" fill="rgb(232,232,232)"/>
<rect x="143.36" y="360.33" width="6.26" height="6.13" fill="rgb(212,212,212)"/>
<rect x="149.32" y="360.33" width="6.26" height="6.13" fill="rgb(191,191,191)"/>
<rect x="155.28" y="360.33" width="6.26" height="6.13" fill="rgb(219,219,219)"/>
<rect x="161.24" y="360.33" width="6.26" height="6.13" fill="rgb(212,212,212)"/>
<rect x="167.20" y="360.33" width="6.26" height="6.13" fill="rgb(200,200,200)"/>
<rect x="173.16" y="360.33" width="6.26" height="6.13" fill="rgb(229,229,229)"/>
<rect x="179.12" y="360.33" width="6.26" height="6.13" fill="rgb(197,197,197)"/>
<rect x="185.08" y="360.33" width="6.26" height="6.13" fill="rgb(221,221,221)"/>
<rect x="191.04" y="360.33" width="6.26" height="6.13" fill="rgb(193,193,193)"/>
<rect x="48.00" y="366.17" width="6.26" height="6.13" fill="rgb(228,228,228)"/>
<rect x="53.96" y="366.17" width="6.26" height="6.13" fill="rgb(246,246,246)"/>
<rect x="59.92" y="366.17" width="6.26" height="6.13" fill="rgb(231,231,231)"/>
<rect x="65.88" y="366.17" width="6.26" height="6.13" fill="rgb(226,226,226)"/>
<rect x="71.84" y="366.17" width="6.26" height="6.13" fill="rgb(245,245,245)"/>
<rect x="77.80" y="366.17" width="6.26" height="6.13" fill="rgb(229,229,229)"/>
<rect x="83.76" y="366.17" width="6.26" height="6.13" fill="rgb(234,234,234)"/>
<rect x="89.72" y="366.17" width="6.26" height="6.13" fill="rgb(234,234,234)"/>
<rect x="95.68" y="366.17" width="6.26" height="6.13" fill="rgb(249,249,249)"/>
<rect x="101.64" y="366.17" width="6.26" height="6.13" fill="rgb(237,237,237)"/>
<rect x="107.60" y="366.17" width="6.26" height="6.13" fill="rgb(224,224,224)"/>
<rect x="113.56" y="366.17" width="6.26" height="6.13" fill="rgb(227,227,227)"/>
<rect x="119.52" y="366.17" width="6.26" height="6.13" fill="rgb(236,236,236)"/>
<rect x="125.48" y="366.17" width="6.26" height="6.13" fill="rgb(234,234,234)"/>
<rect x="131.44" y="366.17" width="6.26" height="6.13" fill="rgb(239,239,239)"/>
<rect x="137.40" y="366.17" width="6.26" height="6.13" fill="rgb(230,230,230)"/>
<rect x="143.36" y="366.17" width="6.26" height="6.13" fill="rgb(250,250,250)"/>
<rect x="149.32" y="366.17" width="6.26" height="6.13" fill="rgb(226,226,226)"/>
<rect x="155.28" y="366.17" width="6.26" height="6.13" fill="rgb(248,248,248)"/>
<rect x="161.24" y="366.17" width="6.26" height="6.13" fill="rgb(235,235,235)"/>
<rect x="167.20" y="366.17" width="6.26" height="6.13" fill="rgb(249,249,249)"/>
<rect x="173.16" y="366.17" width="6.26" height="6.13" fill="rgb(239,239,239)"/>
<rect x="179.12" y="366.17" width="6.26" height="6.13" fill="rgb(230,230,230)"/>
<rect x="185.08" y="366.17" width="6.26" height="6.13" fill="rgb(244,244,244)"/>
<rect x="191.04" y="366.17" width="6.26" height="6.13" fill="rgb(235,235,235)"/>
<text x="200.00" y="362.00" font-size="28" fill="#666666" font-weight="400" text-anchor="start" textLength="131" lengthAdjust="spacingAndGlyphs" font-family="Liberation Sans">ru - 9 jours</text>
<text x="338.00" y="362.00" font-size="28" fill="#666666" font-weight="400" text-anchor="start" font-family="Liberation Sans">(</text>
<rect x="340.00" y="339.00" width="6.38" height="6.30" fill="rgb(239,239,239)"/>
<rect x="346.08" y="339.00" width="6.38" height="6.30" fill="rgb(249,249,249)"/>
<rect x="352.15" y="339.00" width="6.38" height="6.30" fill="rgb(240,240,240)"/>
<rect x="358.23" y="339.00" width="6.38" height="6.30" fill="rgb(235,235,235)"/>
<rect x="364.31" y="339.00" width="6.38" height="6.30" fill="rgb(232,232,232)"/>
<rect x="370.38" y="339.00" width="6.38" height="6.30" fill="rgb(230,230,230)"/>
<rect x="376.46" y="339.00" width="6.38" height="6.30" fill="rgb(233,233,233)"/>
<rect x="382.54" y="339.00" width="6.38" height="6.30" fill="rgb(232,232,232)"/>
<rect x="388.62" y="339.00" width="6.38" height="6.30" fill="rgb(235,235,235)"/>
<rect x="394.69" y="339.00" width="6.38" height="6.30" fill="rgb(249,249,249)"/>
<rect x="400.77" y="339.00" width="6.38" height="6.30" fill="rgb(235,235,235)"/>
<rect x="406.85" y="339.00" width="6.38" height="6.30" fill="rgb(228,228,228)"/>
<rect x="412.92" y="339.00" width="6.38" height="6.30" fill="rgb(243,243,243)"/>
<rect x="419.00" y="339.00" width="6.38" height="6.30" fill="rgb(246,246,246)"/>
<rect x="425.08" y="339.00" width="6.38" height="6.30" fill="rgb(233,233,233)"/>
<rect x="431.15" y="339.00" width="6.38" height="6.30" fill="rgb(236,236,236)"/>
<rect x="437.23" y="339.00" width="6.38" height="6.30" fill="rgb(237,237,237)"/>
<rect x="443.31" y="339.00" width="6.38" height="6.30" fill="rgb(228,228,228)"/>
<rect x="449.38" y="339.00" width="6.38" height="6.30" fill="rgb(232,232,232)"/>
<rect x="455.46" y="339.00" width="6.38" height="6.30" fill="rgb(241,241,241)"/>
<rect x="461.54" y="339.00" width="6.38" height="6.30" fill="rgb(245,245,245)"/>
<rect x="467.62" y="339.00" width="6.38" height="6.30" fill="rgb(239,239,239)"/>
<rect x="473.69" y="339.00" width="6.38" height="6.30" fill="rgb(247,247,247)"/>
<rect x="479.77" y="339.00" width="6.38" height="6.30" fill="rgb(246,246,246)"/>
<rect x="485.85" y="339.00" width="6.38" height="6.30" fill="rgb(238,238,238)"/>
<rect x="491.92" y="339.00" width="6.38" height="6.30" fill="rgb(232,232,232)"/>
<rect x="340.00" y="345.00" width="6.38" height="6.30" fill="rgb(235,235,235)"/>
<rect x="346.08" y="345.00" width="6.38" height="6.30" fill="rgb(176,176,176)"/>
<rect x="352.15" y="345.00" width="6.38" height="6.30" fill="rgb(228,228,228)"/>
<rect x="358.23" y="345.00" width="6.38" height="6.30" fill="rgb(220,220,220)"/>
<rect x="364.31" y="345.00" width="6.38" height="6.30" fill="rgb(220,220,220)"/>
<rect x="370.38" y="345.00" width="6.38" height="6.30" fill="rgb(221,221,221)"/>
<rect x="376.46" y="345.00" width="6.38" height="6.30" fill="rgb(220,220,220)"/>
<rect x="382.54" y="345.00" width="6.38" height="6.30" fill="rgb(183,183,183)"/>
<rect x="388.62" y="345.00" width="6.38" height="6.30" fill="rgb(231,231,231)"/>
<rect x="394.69" y="345.00" width="6.38" height="6.30" fill="rgb(221,221,221)"/>
<rect x="400.77" y="345.00" width="6.38" height="6.30" fill="rgb(177,177,177)"/>
<rect x="406.85" y="345.00" width="6.38" height="6.30" fill="rgb(194,194,194)"/>
<rect x="412.92" y="345.00" width="6.38" height="6.30" fill="rgb(178,178,178)"/>
<rect x="419.00" y="345.00" width="6.38" height="6.30" fill="rgb(196,196,196)"/>
<rect x="425.08" y="345.00" width="6.38" height="6.30" fill="rgb(226,226,226)"/>
<rect x="431.15" y="345.00" width="6.38" height="6.30" fill="rgb(190,190,190)"/>
<rect x="437.23" y="345.00" width="6.38" height="6.30" fill="rgb(184,184,184)"/>
<rect x="443.31" y="345.00" width="6.38" height="6.30" fill="rgb(213,213,213)"/>
<rect x="449.38" y="345.00" width="6.38" height="6.30" fill="rgb(176,176,176)"/>
<rect x="455.46" y="345.00" width="6.38" height="6.30" fill="rgb(183,183,183)"/>
<rect x="461.54" y="345.00" width="6.38" height="6.30" fill="rgb(170,170,170)"/>
<rect x="467.62" y="345.00" width="6.38" height="6.30" fill="rgb(189,189,189)"/>
<rect x="473.69" y="345.00" width="6.38" height="6.30" fill="rgb(182,182,182)"/>
<rect x="479.77" y="345.00" width="6.38" height="6.30" fill="rgb(216,216,216)"/>
<rect x="485.85" y="345.00" width="6.38" height="6.30" fill="rgb(173,173,173)"/>
<rect x="491.92" y="345.00" width="6.38" height="6.30" fill="rgb(179,179,179)"/>
<rect x="340.00" y="351.00" width="6.38" height="6.30" fill="rgb(245,245,245)"/>
<rect x="346.08" y="351.00" width="6.38" height="6.30" fill="rgb(203,203,203)"/>
<rect x="352.15" y="351.00" width="6.38" height="6.30" fill="rgb(229,229,229)"/>
<rect x="358.23" y="351.00" width="6.38" height="6.30" fill="rgb(214,214,214)"/>
<rect x="364.31" y="351.00" width="6.38" height="6.30" fill="rgb(199,199,199)"/>
<rect x="370.38" y="351.00" width="6.38" height="6.30" fill="rgb(230,230,230)"/>
<rect x="376.46" y="351.00" width="6.38" height="6.30" fill="rgb(206,206,206)"/>
<rect x="382.54" y="351.00" width="6.38" height="6.30" fill="rgb(212,212,212)"/>
<rect x="388.62" y="351.00" width="6.38" height="6.30" fill="rgb(228,228,228)"/>
<rect x="394.69" y="351.00" width="6.38" height="6.30" fill="rgb(213,213,213)"/>
<rect x="400.77" y="351.00" width="6.38" height="6.30" fill="rgb(220,220,220)"/>
<rect x="406.85" y="351.00" width="6.38" height="6.30" fill="rgb(197,197,197)"/>
<rect x="412.92" y="351.00" width="6.38" height="6.30" fill="rgb(197,197,197)"/>
<rect x="419.00" y="351.00" width="6.38" height="6.30" fill="rgb(244,244,244)"/>
<rect x="425.08" y="351.00" width="6.38" height="6.30" fill="rgb(221,221,221)"/>
<rect x="431.15" y="351.00" width="6.38" height="6.30" fill="rgb(219,219,219)"/>
<rect x="437.23" y="351.00" width="6.38" height="6.30" fill="rgb(220,220,220)"/>
<rect x="443.31" y="351.00" width="6.38" height="6.30" fill="rgb(220,220,220)"/>
<rect x="449.38" y="351.00" width="6.38" height="6.30" fill="rgb(209,209,209)"/>
<rect x="455.46" y="351.00" width="6.38" height="6.30" fill="rgb(195,195,195)"/>
<rect x="461.54" y="351.00" width="6.38" height="6.30" fill="rgb(199,199,199)"/>
<rect x="467.62" y="351.00" width="6.38" height="6.30" fill="rgb(196,196,196)"/>
<rect x="473.69" y="351.00" width="6.38" height="6.30" fill="rgb(237,237,237)"/>
<rect x="479.77" y="351.00" width="6.38" height="6.30" fill="rgb(211,211,211)"/>
<rect x="485.85" y="351.00" width="6.38" height="6.30" fill="rgb(237,237,237)"/>
<rect x="491.92" y="351.00" width="6.38" height="6.30" fill="rgb(206,206,206)"/>
<rect x="340.00" y="357.00" width="6.38" height="6.30" fill="rgb(220,220,220)"/>
<rect x="346.08" y="357.00" width="6.38" height="6.30" fill="rgb(243,243,243)"/>
<rect x="352.15" y="357.00" width="6.38" height="6.30" fill="rgb(234,234,234)"/>
<rect x="358.23" y="357.00" width="6.38" height="6.30" fill="rgb(200,200,200)"/>
<rect x="364.31" y="357.00" width="6.38" height="6.30" fill="rgb(223,223,223)"/>
<rect x="370.38" y="357.00" width="6.38" height="6.30" fill="rgb(191,191,191)"/>
<rect x="376.46" y="357.00" width="6.38" height="6.30" fill="rgb(203,203,203)"/>
<rect x="382.54" y="357.00" width="6.38" height="6.30" fill="rgb(223,223,223)"/>
<rect x="388.62" y="357.00" width="6.38" height="6.30" fill="rgb(213,213,213)"/>
<rect x="394.69" y="357.00" width="6.38" height="6.30" fill="rgb(199,199,199)"/>
<rect x="400.77" y="357.00" width="6.38" height="6.30" fill="rgb(234,234,234)"/>
<rect x="406.85" y="357.00" width="6.38" height="6.30" fill="rgb(224,224,224)"/>
<rect x="412.92" y="357.00" width="6.38" height="6.30" fill="rgb(191,191,191)"/>
<rect x="419.00" y="357.00" width="6.38" height="6.30" fill="rgb(238,238,238)"/>
<rect x="425.08" y="357.00" width="6.38" height="6.30" fill="rgb(223,223,223)"/>
<rect x="431.15" y="357.00" width="6.38" height="6.30" fill="rgb(209,209,209)"/>
<rect x="437.23" y="357.00" width="6.38" height="6.30" fill="rgb(231,231,231)"/>
<rect x="443.31" y="357.00" width="6.38" height="6.30" fill="rgb(245,245,245)"/>
<rect x="449.38" y="357.00" width="6.38" height="6.30" fill="rgb(195,195,195)"/>
<rect x="455.46" y="357.00" width="6.38" height="6.30" fill="rgb(234,234,234)"/>
<rect x="461.54" y="357.00" width="6.38" height="6.30" fill="rgb(244,244,244)"/>
<rect x="467.62" y="357.00" width="6.38" height="6.30" fill="rgb(206,206,206)"/>
<rect x="473.69" y="357.00" width="6.38" height="6.30" fill="rgb(223,223,223)"/>
<rect x="479.77" y="357.00" width="6.38" height="6.30" fill="rgb(213,213,213)"/>
<rect x="485.85" y="357.00" width="6.38" height="6.30" fill="rgb(200,200,200)"/>
<rect x="491.92" y="357.00" width="6.38" height="6.30" fill="rgb(212,212,212)"/>
<rect x="340.00" y="363.00" width="6.38" height="6.30" fill="rgb(246,246,246)"/>
<rect x="346.08" y="363.00" width="6.38" height="6.30" fill="rgb(229,229,229)"/>
<rect x="352.15" y="363.00" width="6.38" height="6.30" fill="rgb(239,239,239)"/>
<rect x="358.23" y="363.00" width="6.38" height="6.30" fill="rgb(239,239,239)"/>
<rect x="364.31" y="363.00" width="6.38" height="6.30" fill="rgb(246,246,246)"/>
<rect x="370.38" y="363.00" width="6.38" height="6.30" fill="rgb(238,238,238)"/>
<rect x="376.46" y="363.00" width="6.38" height="6.30" fill="rgb(232,232,232)"/>
<rect x="382.54" y="363.00" width="6.38" height="6.30" fill="rgb(242,242,242)"/>
<rect x="388.62" y="363.00" width="6.38" height="6.30" fill="rgb(229,229,229)"/>
<rect x="394.69" y="363.00" width="6.38" height="6.30" fill="rgb(241,241,241)"/>
<rect x="400.77" y="363.00" width="6.38" height="6.30" fill="rgb(247,247,247)"/>
<rect x="406.85" y="363.00" width="6.38" height="6.30" fill="rgb(247,247,247)"/>
<rect x="412.92" y="363.00" width="6.38" height="6.30" fill="rgb(246,246,246)"/>
<rect x="419.00" y="363.00" width="6.38" height="6.30" fill="rgb(249,249,249)"/>
<rect x="425.08" y="363.00" width="6.38" height="6.30" fill="rgb(228,228,228)"/>
<rect x="431.15" y="363.00" width="6.38" height="6.30" fill="rgb(247,247,247)"/>
<rect x="437.23" y="363.00" width="6.38" height="6.30" fill="rgb(229,229,229)"/>
<rect x="443.31" y="363.00" width="6.38" height="6.30" fill="rgb(248,248,248)"/>
<rect x="449.38" y="363.00" width="6.38" height="6.30" fill="rgb(234,234,234)"/>
<rect x="455.46" y="363.00" width="6.38" height="6.30" fill="rgb(245,245,245)"/>
<rect x="461.54" y="363.00" width="6.38" height="6.30" fill="rgb(247,247,247)"/>
<rect x="467.62" y="363.00" width="6.38" height="6.30" fill="rgb(229,229,229)"/>
<rect x="473.69" y="363.00" width="6.38" height="6.30" fill="rgb(228,228,228)"/>
<rect x="479.77" y="363.00" width="6.38" height="6.30" fill="rgb(238,238,238)"/>
<rect x="485.85" y="363.00" width="6.38" height="6.30" fill="rgb(237,237,237)"/>
<rect x="491.92" y="363.00" width="6.38" height="6.30" fill="rgb(233,233,233)"/>
<text x="499.00" y="362.00" font-size="28" fill="#666666" font-weight="400" text-anchor="start" textLength="41" lengthAdjust="spacingAndGlyphs" font-family="Liberation Sans">ru.)</text>
<rect x="48.00" y="978.00" width="6.22" height="6.30" fill="rgb(251,251,251)"/>
<rect x="53.92" y="978.00" width="6.22" height="6.30" fill="rgb(228,228,228)"/>
<rect x="59.85" y="978.00" width="6.22" height="6.30" fill="rgb(228,228,228)"/>
<rect x="65.77" y="978.00" width="6.22" height="6.30" fill="rgb(236,236,236)"/>
<rect x="71.69" y="978.00" width="6.22" height="6.30" fill="rgb(243,243,243)"/>
<rect x="77.62" y="978.00" width="6.22" height="6.30" fill="rgb(236,236,236)"/>
<rect x="83.54" y="978.00" width="6.22" height="6.30" fill="rgb(234,234,234)"/>
<rect x="89.46" y="978.00" width="6.22" height="6.30" fill="rgb(250,250,250)"/>
<rect x="95.38" y="978.00" width="6.22" height="6.30" fill="rgb(247,247,247)"/>
<rect x="101.31" y="978.00" width="6.22" height="6.30" fill="rgb(239,239,239)"/>
<rect x="107.23" y="978.00" width="6.22" height="6.30" fill="rgb(242,242,242)"/>
<rect x="113.15" y="978.00" width="6.22" height="6.30" fill="rgb(251,251,251)"/>
<rect x="119.08" y="978.00" width="6.22" height="6.30" fill="rgb(239,239,239)"/>
<rect x="48.00" y="984.00" width="6.22" height="6.30" fill="rgb(216,216,216)"/>
<rect x="53.92" y="984.00" width="6.22" height="6.30" fill="rgb(180,180,180)"/>
<rect x="59.85" y="984.00" width="6.22" height="6.30" fill="rgb(198,198,198)"/>
<rect x="65.77" y="984.00" width="6.22" height="6.30" fill="rgb(183,183,183)"/>
<rect x="71.69" y="984.00" width="6.22" height="6.30" fill="rgb(199,199,199)"/>
<rect x="77.62" y="984.00" width="6.22" height="6.30" fill="rgb(230,230,230)"/>
<rect x="83.54" y="984.00" width="6.22" height="6.30" fill="rgb(195,195,195)"/>
<rect x="89.46" y="984.00" width="6.22" height="6.30" fill="rgb(213,213,213)"/>
<rect x="95.38" y="984.00" width="6.22" height="6.30" fill="rgb(196,196,196)"/>
<rect x="101.31" y="984.00" width="6.22" height="6.30" fill="rgb(231,231,231)"/>
<rect x="107.23" y="984.00" width="6.22" height="6.30" fill="rgb(170,170,170)"/>
<rect x="113.15" y="984.00" width="6.22" height="6.30" fill="rgb(231,231,231)"/>
<rect x="119.08" y="984.00" width="6.22" height="6.30" fill="rgb(214,214,214)"/>
<rect x="48.00" y="990.00" width="6.22" height="6.30" fill="rgb(241,241,241)"/>
<rect x="53.92" y="990.00" width="6.22" height="6.30" fill="rgb(231,231,231)"/>
<rect x="59.85" y="990.00" width="6.22" height="6.30" fill="rgb(195,195,195)"/>
<rect x="65.77" y="990.00" width="6.22" height="6.30" fill="rgb(243,243,243)"/>
<rect x="71.69" y="990.00" width="6.22" height="6.30" fill="rgb(232,232,232)"/>
<rect x="77.62" y="990.00" width="6.22" height="6.30" fill="rgb(197,197,197)"/>
<rect x="83.54" y="990.00" width="6.22" height="6.30" fill="rgb(214,214,214)"/>
<rect x="89.46" y="990.00" width="6.22" height="6.30" fill="rgb(240,240,240)"/>
<rect x="95.38" y="990.00" width="6.22" height="6.30" fill="rgb(235,235,235)"/>
<rect x="101.31" y="990.00" width="6.22" height="6.30" fill="rgb(238,238,238)"/>
<rect x="107.23" y="990.00" width="6.22" height="6.30" fill="rgb(202,202,202)"/>
<rect x="113.15" y="990.00" width="6.22" height="6.30" fill="rgb(220,220,220)"/>
<rect x="119.08" y="990.00" width="6.22" height="6.30" fill="rgb(201,201,201)"/>
<rect x="48.00" y="996.00" width="6.22" height="6.30" fill="rgb(217,217,217)"/>
<rect x="53.92" y="996.00" width="6.22" height="6.30" fill="rgb(240,240,240)"/>
<rect x="59.85" y="996.00" width="6.22" height="6.30" fill="rgb(230,230,230)"/>
<rect x="65.77" y="996.00" width="6.22" height="6.30" fill="rgb(211,211,211)"/>
<rect x="71.69" y="996.00" width="6.22" height="6.30" fill="rgb(195,195,195)"/>
<rect x="77.62" y="996.00" width="6.22" height="6.30" fill="rgb(241,241,241)"/>
<rect x="83.54" y="996.00" width="6.22" height="6.30" fill="rgb(236,236,236)"/>
<rect x="89.46" y="996.00" width="6.22" height="6.30" fill="rgb(215,215,215)"/>
<rect x="95.38" y="996.00" width="6.22" height="6.30" fill="rgb(219,219,219)"/>
<rect x="101.31" y="996.00" width="6.22" height="6.30" fill="rgb(215,215,215)"/>
<rect x="107.23" y="996.00" width="6.22" height="6.30" fill="rgb(237,237,237)"/>
<rect x="113.15" y="996.00" width="6.22" height="6.30" fill="rgb(195,195,195)"/>
<rect x="119.08" y="996.00" width="6.22" height="6.30" fill="rgb(236,236,236)"/>
<rect x="48.00" y="1002.00" width="6.22" height="6.30" fill="rgb(227,227,227)"/>
<rect x="53.92" y="1002.00" width="6.22" height="6.30" fill="rgb(227,227,227)"/>
<rect x="59.85" y="1002.00" width="6.22" height="6.30" fill="rgb(226,226,226)"/>
<rect x="65.77" y="1002.00" width="6.22" height="6.30" fill="rgb(222,222,222)"/>
<rect x="71.69" y="1002.00" width="6.22" height="6.30" fill="rgb(226,226,226)"/>
<rect x="77.62" y="1002.00" width="6.22" height="6.30" fill="rgb(240,240,240)"/>
<rect x="83.54" y="1002.00" width="6.22" height="6.30" fill="rgb(250,250,250)"/>
<rect x="89.46" y="1002.00" width="6.22" height="6.30" fill="rgb(236,236,236)"/>
<rect x="95.38" y="1002.00" width="6.22" height="6.30" fill="rgb(247,247,247)"/>
<rect x="101.31" y="1002.00" width="6.22" height="6.30" fill="rgb(242,242,242)"/>
<rect x="107.23" y="1002.00" width="6.22" height="6.30" fill="rgb(226,226,226)"/>
<rect x="113.15" y="1002.00" width="6.22" height="6.30" fill="rgb(241,241,241)"/>
<rect x="119.08" y="1002.00" width="6.22" height="6.30" fill="rgb(248,248,248)"/>
<text x="126.00" y="1002.00" font-size="28" fill="#666666" font-weight="400" text-anchor="start" textLength="141" lengthAdjust="spacingAndGlyphs" font-family="Liberation Sans">com 9 jours</text>
<text x="276.00" y="1002.00" font-size="28" fill="#666666" font-weight="400" text-anchor="start" font-family="Liberation Sans">(</text>
<rect x="282.00" y="980.00" width="6.30" height="5.90" fill="rgb(247,247,247)"/>
<rect x="288.00" y="980.00" width="6.30" height="5.90" fill="rgb(243,243,243)"/>
<rect x="294.00" y="980.00" width="6.30" height="5.90" fill="rgb(249,249,249)"/>
<rect x="300.00" y="980.00" width="6.30" height="5.90" fill="rgb(239,239,239)"/>
<rect x="306.00" y="980.00" width="6.30" height="5.90" fill="rgb(232,232,232)"/>
<rect x="312.00" y="980.00" width="6.30" height="5.90" fill="rgb(245,245,245)"/>
<rect x="318.00" y="980.00" width="6.30" height="5.90" fill="rgb(245,245,245)"/>
<rect x="324.00" y="980.00" width="6.30" height="5.90" fill="rgb(232,232,232)"/>
<rect x="330.00" y="980.00" width="6.30" height="5.90" fill="rgb(228,228,228)"/>
<rect x="336.00" y="980.00" width="6.30" height="5.90" fill="rgb(228,228,228)"/>
<rect x="342.00" y="980.00" width="6.30" height="5.90" fill="rgb(251,251,251)"/>
<rect x="348.00" y="980.00" width="6.30" height="5.90" fill="rgb(248,248,248)"/>
<rect x="282.00" y="985.60" width="6.30" height="5.90" fill="rgb(183,183,183)"/>
<rect x="288.00" y="985.60" width="6.30" height="5.90" fill="rgb(187,187,187)"/>
<rect x="294.00" y="985.60" width="6.30" height="5.90" fill="rgb(225,225,225)"/>
<rect x="300.00" y="985.60" width="6.30" height="5.90" fill="rgb(194,194,194)"/>
<rect x="306.00" y="985.60" width="6.30" height="5.90" fill="rgb(197,197,197)"/>
<rect x="312.00" y="985.60" width="6.30" height="5.90" fill="rgb(173,173,173)"/>
<rect x="318.00" y="985.60" width="6.30" height="5.90" fill="rgb(202,202,202)"/>
<rect x="324.00" y="985.60" width="6.30" height="5.90" fill="rgb(197,197,197)"/>
<rect x="330.00" y="985.60" width="6.30" height="5.90" fill="rgb(207,207,207)"/>
<rect x="336.00" y="985.60" width="6.30" height="5.90" fill="rgb(234,234,234)"/>
<rect x="342.00" y="985.60" width="6.30" height="5.90" fill="rgb(200,200,200)"/>
<rect x="348.00" y="985.60" width="6.30" height="5.90" fill="rgb(211,211,211)"/>
<rect x="282.00" y="991.20" width="6.30" height="5.90" fill="rgb(206,206,206)"/>
<rect x="288.00" y="991.20" width="6.30" height="5.90" fill="rgb(224,224,224)"/>
<rect x="294.00" y="991.20" width="6.30" height="5.90" fill="rgb(216,216,216)"/>
<rect x="300.00" y="991.20" width="6.30" height="5.90" fill="rgb(243,243,243)"/>
<rect x="306.00" y="991.20" width="6.30" height="5.90" fill="rgb(198,198,198)"/>
<rect x="312.00" y="991.20" width="6.30" height="5.90" fill="rgb(193,193,193)"/>
<rect x="318.00" y="991.20" width="6.30" height="5.90" fill="rgb(237,237,237)"/>
<rect x="324.00" y="991.20" width="6.30" height="5.90" fill="rgb(212,212,212)"/>
<rect x="330.00" y="991.20" width="6.30" height="5.90" fill="rgb(219,219,219)"/>
<rect x="336.00" y="991.20" width="6.30" height="5.90" fill="rgb(232,232,232)"/>
<rect x="342.00" y="991.20" width="6.30" height="5.90" fill="rgb(227,227,227)"/>
<rect x="348.00" y="991.20" width="6.30" height="5.90" fill="rgb(242,242,242)"/>
<rect x="282.00" y="996.80" width="6.30" height="5.90" fill="rgb(223,223,223)"/>
<rect x="288.00" y="996.80" width="6.30" height="5.90" fill="rgb(216,216,216)"/>
<rect x="294.00" y="996.80" width="6.30" height="5.90" fill="rgb(242,242,242)"/>
<rect x="300.00" y="996.80" width="6.30" height="5.90" fill="rgb(222,222,222)"/>
<rect x="306.00" y="996.80" width="6.30" height="5.90" fill="rgb(198,198,198)"/>
<rect x="312.00" y="996.80" width="6.30" height="5.90" fill="rgb(224,224,224)"/>
<rect x="318.00" y="996.80" width="6.30" height="5.90" fill="rgb(199,199,199)"/>
<rect x="324.00" y="996.80" width="6.30" height="5.90" fill="rgb(223,223,223)"/>
<rect x="330.00" y="996.80" width="6.30" height="5.90" fill="rgb(222,222,222)"/>
<rect x="336.00" y="996.80" width="6.30" height="5.90" fill="rgb(191,191,191)"/>
<rect x="342.00" y="996.80" width="6.30" height="5.90" fill="rgb(245,245,245)"/>
<rect x="348.00" y="996.80" width="6.30" height="5.90" fill="rgb(218,218,218)"/>
<rect x="282.00" y="1002.40" width="6.30" height="5.90" fill="rgb(246,246,246)"/>
<rect x="288.00" y="1002.40" width="6.30" height="5.90" fill="rgb(227,227,227)"/>
<rect x="294.00" y="1002.40" width="6.30" height="5.90" fill="rgb(241,241,241)"/>
<rect x="300.00" y="1002.40" width="6.30" height="5.90" fill="rgb(222,222,222)"/>
<rect x="306.00" y="1002.40" width="6.30" height="5.90" fill="rgb(246,246,246)"/>
<rect x="312.00" y="1002.40" width="6.30" height="5.90" fill="rgb(247,247,247)"/>
<rect x="318.00" y="1002.40" width="6.30" height="5.90" fill="rgb(226,226,226)"/>
<rect x="324.00" y="1002.40" width="6.30" height="5.90" fill="rgb(227,227,227)"/>
<rect x="330.00" y="1002.40" width="6.30" height="5.90" fill="rgb(226,226,226)"/>
<rect x="336.00" y="1002.40" width="6.30" height="5.90" fill="rgb(237,237,237)"/>
<rect x="342.00" y="1002.40" width="6.30" height="5.90" fill="rgb(241,241,241)"/>
<rect x="348.00" y="1002.40" width="6.30" height="5.90" fill="rgb(245,245,245)"/>
<text x="355.00" y="1002.00" font-size="28" fill="#666666" font-weight="400" text-anchor="start" textLength="72" lengthAdjust="spacingAndGlyphs" font-family="Liberation Sans">com.)</text>
<text x="1649.00" y="362.00" font-size="28" fill="#666666" font-weight="400" text-anchor="start" textLength="101" lengthAdjust="spacingAndGlyphs" font-family="Liberation Sans">30 Days</text>
<text x="1756.00" y="362.00" font-size="28" fill="#666666" font-weight="400" text-anchor="start" font-family="Liberation Sans">(</text>
<rect x="1760.00" y="343.00" width="6.22" height="6.80" fill="rgb(231,231,231)"/>
<rect x="1765.92" y="343.00" width="6.22" height="6.80" fill="rgb(245,245,245)"/>
<rect x="1771.85" y="343.00" width="6.22" height="6.80" fill="rgb(229,229,229)"/>
<rect x="1777.77" y="343.00" width="6.22" height="6.80" fill="rgb(238,238,238)"/>
<rect x="1783.69" y="343.00" width="6.22" height="6.80" fill="rgb(249,249,249)"/>
<rect x="1789.62" y="343.00" width="6.22" height="6.80" fill="rgb(244,244,244)"/>
<rect x="1795.54" y="343.00" width="6.22" height="6.80" fill="rgb(244,244,244)"/>
<rect x="1801.46" y="343.00" width="6.22" height="6.80" fill="rgb(245,245,245)"/>
<rect x="1807.38" y="343.00" width="6.22" height="6.80" fill="rgb(243,243,243)"/>
<rect x="1813.31" y="343.00" width="6.22" height="6.80" fill="rgb(252,252,252)"/>
<rect x="1819.23" y="343.00" width="6.22" height="6.80" fill="rgb(231,231,231)"/>
<rect x="1825.15" y="343.00" width="6.22" height="6.80" fill="rgb(245,245,245)"/>
<rect x="1831.08" y="343.00" width="6.22" height="6.80" fill="rgb(229,229,229)"/>
<rect x="1837.00" y="343.00" width="6.22" height="6.80" fill="rgb(235,235,235)"/>
<rect x="1842.92" y="343.00" width="6.22" height="6.80" fill="rgb(234,234,234)"/>
<rect x="1848.85" y="343.00" width="6.22" height="6.80" fill="rgb(236,236,236)"/>
<rect x="1854.77" y="343.00" width="6.22" height="6.80" fill="rgb(229,229,229)"/>
<rect x="1860.69" y="343.00" width="6.22" height="6.80" fill="rgb(252,252,252)"/>
<rect x="1866.62" y="343.00" width="6.22" height="6.80" fill="rgb(231,231,231)"/>
<rect x="1872.54" y="343.00" width="6.22" height="6.80" fill="rgb(244,244,244)"/>
<rect x="1878.46" y="343.00" width="6.22" height="6.80" fill="rgb(242,242,242)"/>
<rect x="1884.38" y="343.00" width="6.22" height="6.80" fill="rgb(245,245,245)"/>
<rect x="1890.31" y="343.00" width="6.22" height="6.80" fill="rgb(228,228,228)"/>
<rect x="1896.23" y="343.00" width="6.22" height="6.80" fill="rgb(252,252,252)"/>
<rect x="1902.15" y="343.00" width="6.22" height="6.80" fill="rgb(230,230,230)"/>
<rect x="1908.08" y="343.00" width="6.22" height="6.80" fill="rgb(242,242,242)"/>
<rect x="1760.00" y="349.50" width="6.22" height="6.80" fill="rgb(211,211,211)"/>
<rect x="1765.92" y="349.50" width="6.22" height="6.80" fill="rgb(234,234,234)"/>
<rect x="1771.85" y="349.50" width="6.22" height="6.80" fill="rgb(235,235,235)"/>
<rect x="1777.77" y="349.50" width="6.22" height="6.80" fill="rgb(195,195,195)"/>
<rect x="1783.69" y="349.50" width="6.22" height="6.80" fill="rgb(205,205,205)"/>
<rect x="1789.62" y="349.50" width="6.22" height="6.80" fill="rgb(227,227,227)"/>
<rect x="1795.54" y="349.50" width="6.22" height="6.80" fill="rgb(235,235,235)"/>
<rect x="1801.46" y="349.50" width="6.22" height="6.80" fill="rgb(231,231,231)"/>
<rect x="1807.38" y="349.50" width="6.22" height="6.80" fill="rgb(234,234,234)"/>
<rect x="1813.31" y="349.50" width="6.22" height="6.80" fill="rgb(201,201,201)"/>
<rect x="1819.23" y="349.50" width="6.22" height="6.80" fill="rgb(203,203,203)"/>
<rect x="1825.15" y="349.50" width="6.22" height="6.80" fill="rgb(195,195,195)"/>
<rect x="1831.08" y="349.50" width="6.22" height="6.80" fill="rgb(227,227,227)"/>
<rect x="1837.00" y="349.50" width="6.22" height="6.80" fill="rgb(187,187,187)"/>
<rect x="1842.92" y="349.50" width="6.22" height="6.80" fill="rgb(223,223,223)"/>
<rect x="1848.85" y="349.50" width="6.22" height="6.80" fill="rgb(185,185,185)"/>
<rect x="1854.77" y="349.50" width="6.22" height="6.80" fill="rgb(220,220,220)"/>
<rect x="1860.69" y="349.50" width="6.22" height="6.80" fill="rgb(226,226,226)"/>
<rect x="1866.62" y="349.50" width="6.22" height="6.80" fill="rgb(210,210,210)"/>
<rect x="1872.54" y="349.50" width="6.22" height="6.80" fill="rgb(179,179,179)"/>
<rect x="1878.46" y="349.50" width="6.22" height="6.80" fill="rgb(200,200,200)"/>
<rect x="1884.38" y="349.50" width="6.22" height="6.80" fill="rgb(224,224,224)"/>
<rect x="1890.31" y="349.50" width="6.22" height="6.80" fill="rgb(179,179,179)"/>
<rect x="1896.23" y="349.50" width="6.22" height="6.80" fill="rgb(197,197,197)"/>
<rect x="1902.15" y="349.50" width="6.22" height="6.80" fill="rgb(208,208,208)"/>
<rect x="1908.08" y="349.50" width="6.22" height="6.80" fill="rgb(185,185,185)"/>
<rect x="1760.00" y="356.00" width="6.22" height="6.80" fill="rgb(239,239,239)"/>
<rect x="1765.92" y="356.00" width="6.22" height="6.80" fill="rgb(199,199,199)"/>
<rect x="1771.85" y="356.00" width="6.22" height="6.80" fill="rgb(235,235,235)"/>
<rect x="1777.77" y="356.00" width="6.22" height="6.80" fill="rgb(231,231,231)"/>
<rect x="1783.69" y="356.00" width="6.22" height="6.80" fill="rgb(232,232,232)"/>
<rect x="1789.62" y="356.00" width="6.22" height="6.80" fill="rgb(213,213,213)"/>
<rect x="1795.54" y="356.00" width="6.22" height="6.80" fill="rgb(199,199,199)"/>
<rect x="1801.46" y="356.00" width="6.22" height="6.80" fill="rgb(206,206,206)"/>
<rect x="1807.38" y="356.00" width="6.22" height="6.80" fill="rgb(198,198,198)"/>
<rect x="1813.31" y="356.00" width="6.22" height="6.80" fill="rgb(219,219,219)"/>
<rect x="1819.23" y="356.00" width="6.22" height="6.80" fill="rgb(204,204,204)"/>
<rect x="1825.15" y="356.00" width="6.22" height="6.80" fill="rgb(237,237,237)"/>
<rect x="1831.08" y="356.00" width="6.22" height="6.80" fill="rgb(196,196,196)"/>
<rect x="1837.00" y="356.00" width="6.22" height="6.80" fill="rgb(215,215,215)"/>
<rect x="1842.92" y="356.00" width="6.22" height="6.80" fill="rgb(221,221,221)"/>
<rect x="1848.85" y="356.00" width="6.22" height="6.80" fill="rgb(200,200,200)"/>
<rect x="1854.77" y="356.00" width="6.22" height="6.80" fill="rgb(232,232,232)"/>
<rect x="1860.69" y="356.00" width="6.22" height="6.80" fill="rgb(243,243,243)"/>
<rect x="1866.62" y="356.00" width="6.22" height="6.80" fill="rgb(204,204,204)"/>
<rect x="1872.54" y="356.00" width="6.22" height="6.80" fill="rgb(200,200,200)"/>
<rect x="1878.46" y="356.00" width="6.22" height="6.80" fill="rgb(235,235,235)"/>
<rect x="1884.38" y="356.00" width="6.22" height="6.80" fill="rgb(217,217,217)"/>
<rect x="1890.31" y="356.00" width="6.22" height="6.80" fill="rgb(222,222,222)"/>
<rect x="1896.23" y="356.00" width="6.22" height="6.80" fill="rgb(215,215,215)"/>
<rect x="1902.15" y="356.00" width="6.22" height="6.80" fill="rgb(211,211,211)"/>
<rect x="1908.08" y="356.00" width="6.22" height="6.80" fill="rgb(216,216,216)"/>
<rect x="1760.00" y="362.50" width="6.22" height="6.80" fill="rgb(228,228,228)"/>
<rect x="1765.92" y="362.50" width="6.22" height="6.80" fill="rgb(233,233,233)"/>
<rect x="1771.85" y="362.50" width="6.22" height="6.80" fill="rgb(232,232,232)"/>
<rect x="1777.77" y="362.50" width="6.22" height="6.80" fill="rgb(224,224,224)"/>
<rect x="1783.69" y="362.50" width="6.22" height="6.80" fill="rgb(245,245,245)"/>
<rect x="1789.62" y="362.50" width="6.22" height="6.80" fill="rgb(233,233,233)"/>
<rect x="1795.54" y="362.50" width="6.22" height="6.80" fill="rgb(222,222,222)"/>
<rect x="1801.46" y="362.50" width="6.22" height="6.80" fill="rgb(232,232,232)"/>
<rect x="1807.38" y="362.50" width="6.22" height="6.80" fill="rgb(239,239,239)"/>
<rect x="1813.31" y="362.50" width="6.22" height="6.80" fill="rgb(236,236,236)"/>
<rect x="1819.23" y="362.50" width="6.22" height="6.80" fill="rgb(236,236,236)"/>
<rect x="1825.15" y="362.50" width="6.22" height="6.80" fill="rgb(244,244,244)"/>
<rect x="1831.08" y="362.50" width="6.22" height="6.80" fill="rgb(222,222,222)"/>
<rect x="1837.00" y="362.50" width="6.22" height="6.80" fill="rgb(234,234,234)"/>
<rect x="1842.92" y="362.50" width="6.22" height="6.80" fill="rgb(232,232,232)"/>
<rect x="1848.85" y="362.50" width="6.22" height="6.80" fill="rgb(238,238,238)"/>
<rect x="1854.77" y="362.50" width="6.22" height="6.80" fill="rgb(241,241,241)"/>
<rect x="1860.69" y="362.50" width="6.22" height="6.80" fill="rgb(231,231,231)"/>
<rect x="1866.62" y="362.50" width="6.22" height="6.80" fill="rgb(238,238,238)"/>
<rect x="1872.54" y="362.50" width="6.22" height="6.80" fill="rgb(224,224,224)"/>
<rect x="1878.46" y="362.50" width="6.22" height="6.80" fill="rgb(225,225,225)"/>
<rect x="1884.38" y="362.50" width="6.22" height="6.80" fill="rgb(247,247,247)"/>
<rect x="1890.31" y="362.50" width="6.22" height="6.80" fill="rgb(229,229,229)"/>
<rect x="1896.23" y="362.50" width="6.22" height="6.80" fill="rgb(250,250,250)"/>
<rect x="1902.15" y="362.50" width="6.22" height="6.80" fill="rgb(225,225,225)"/>
<rect x="1908.08" y="362.50" width="6.22" height="6.80" fill="rgb(224,224,224)"/>
<text x="1917.00" y="362.00" font-size="28" fill="#666666" font-weight="400" text-anchor="start" textLength="39" lengthAdjust="spacingAndGlyphs" font-family="Liberation Sans">ru.)</text>
<text x="1648.00" y="1002.00" font-size="28" fill="#666666" font-weight="400" text-anchor="start" textLength="101" lengthAdjust="spacingAndGlyphs" font-family="Liberation Sans">30 Days</text>
<text x="1756.00" y="1002.00" font-size="28" fill="#666666" font-weight="400" text-anchor="start" font-family="Liberation Sans">(</text>
<rect x="1757.00" y="983.00" width="6.30" height="6.80" fill="rgb(236,236,236)"/>
<rect x="1763.00" y="983.00" width="6.30" height="6.80" fill="rgb(236,236,236)"/>
<rect x="1769.00" y="983.00" width="6.30" height="6.80" fill="rgb(229,229,229)"/>
<rect x="1775.00" y="983.00" width="6.30" height="6.80" fill="rgb(252,252,252)"/>
<rect x="1781.00" y="983.00" width="6.30" height="6.80" fill="rgb(233,233,233)"/>
<rect x="1787.00" y="983.00" width="6.30" height="6.80" fill="rgb(236,236,236)"/>
<rect x="1793.00" y="983.00" width="6.30" height="6.80" fill="rgb(252,252,252)"/>
<rect x="1799.00" y="983.00" width="6.30" height="6.80" fill="rgb(232,232,232)"/>
<rect x="1805.00" y="983.00" width="6.30" height="6.80" fill="rgb(241,241,241)"/>
<rect x="1811.00" y="983.00" width="6.30" height="6.80" fill="rgb(249,249,249)"/>
<rect x="1817.00" y="983.00" width="6.30" height="6.80" fill="rgb(236,236,236)"/>
<rect x="1823.00" y="983.00" width="6.30" height="6.80" fill="rgb(240,240,240)"/>
<rect x="1829.00" y="983.00" width="6.30" height="6.80" fill="rgb(232,232,232)"/>
<rect x="1835.00" y="983.00" width="6.30" height="6.80" fill="rgb(245,245,245)"/>
<rect x="1757.00" y="989.50" width="6.30" height="6.80" fill="rgb(235,235,235)"/>
<rect x="1763.00" y="989.50" width="6.30" height="6.80" fill="rgb(233,233,233)"/>
<rect x="1769.00" y="989.50" width="6.30" height="6.80" fill="rgb(211,211,211)"/>
<rect x="1775.00" y="989.50" width="6.30" height="6.80" fill="rgb(181,181,181)"/>
<rect x="1781.00" y="989.50" width="6.30" height="6.80" fill="rgb(205,205,205)"/>
<rect x="1787.00" y="989.50" width="6.30" height="6.80" fill="rgb(177,177,177)"/>
<rect x="1793.00" y="989.50" width="6.30" height="6.80" fill="rgb(193,193,193)"/>
<rect x="1799.00" y="989.50" width="6.30" height="6.80" fill="rgb(224,224,224)"/>
<rect x="1805.00" y="989.50" width="6.30" height="6.80" fill="rgb(179,179,179)"/>
<rect x="1811.00" y="989.50" width="6.30" height="6.80" fill="rgb(204,204,204)"/>
<rect x="1817.00" y="989.50" width="6.30" height="6.80" fill="rgb(172,172,172)"/>
<rect x="1823.00" y="989.50" width="6.30" height="6.80" fill="rgb(181,181,181)"/>
<rect x="1829.00" y="989.50" width="6.30" height="6.80" fill="rgb(203,203,203)"/>
<rect x="1835.00" y="989.50" width="6.30" height="6.80" fill="rgb(180,180,180)"/>
<rect x="1757.00" y="996.00" width="6.30" height="6.80" fill="rgb(228,228,228)"/>
<rect x="1763.00" y="996.00" width="6.30" height="6.80" fill="rgb(244,244,244)"/>
<rect x="1769.00" y="996.00" width="6.30" height="6.80" fill="rgb(204,204,204)"/>
<rect x="1775.00" y="996.00" width="6.30" height="6.80" fill="rgb(194,194,194)"/>
<rect x="1781.00" y="996.00" width="6.30" height="6.80" fill="rgb(206,206,206)"/>
<rect x="1787.00" y="996.00" width="6.30" height="6.80" fill="rgb(245,245,245)"/>
<rect x="1793.00" y="996.00" width="6.30" height="6.80" fill="rgb(197,197,197)"/>
<rect x="1799.00" y="996.00" width="6.30" height="6.80" fill="rgb(219,219,219)"/>
<rect x="1805.00" y="996.00" width="6.30" height="6.80" fill="rgb(190,190,190)"/>
<rect x="1811.00" y="996.00" width="6.30" height="6.80" fill="rgb(211,211,211)"/>
<rect x="1817.00" y="996.00" width="6.30" height="6.80" fill="rgb(225,225,225)"/>
<rect x="1823.00" y="996.00" width="6.30" height="6.80" fill="rgb(216,216,216)"/>
<rect x="1829.00" y="996.00" width="6.30" height="6.80" fill="rgb(207,207,207)"/>
<rect x="1835.00" y="996.00" width="6.30" height="6.80" fill="rgb(229,229,229)"/>
<rect x="1757.00" y="1002.50" width="6.30" height="6.80" fill="rgb(226,226,226)"/>
<rect x="1763.00" y="1002.50" width="6.30" height="6.80" fill="rgb(223,223,223)"/>
<rect x="1769.00" y="1002.50" width="6.30" height="6.80" fill="rgb(238,238,238)"/>
<rect x="1775.00" y="1002.50" width="6.30" height="6.80" fill="rgb(244,244,244)"/>
<rect x="1781.00" y="1002.50" width="6.30" height="6.80" fill="rgb(229,229,229)"/>
<rect x="1787.00" y="1002.50" width="6.30" height="6.80" fill="rgb(225,225,225)"/>
<rect x="1793.00" y="1002.50" width="6.30" height="6.80" fill="rgb(227,227,227)"/>
<rect x="1799.00" y="1002.50" width="6.30" height="6.80" fill="rgb(230,230,230)"/>
<rect x="1805.00" y="1002.50" width="6.30" height="6.80" fill="rgb(223,223,223)"/>
<rect x="1811.00" y="1002.50" width="6.30" height="6.80" fill="rgb(227,227,227)"/>
<rect x="1817.00" y="1002.50" width="6.30" height="6.80" fill="rgb(228,228,228)"/>
<rect x="1823.00" y="1002.50" width="6.30" height="6.80" fill="rgb(231,231,231)"/>
<rect x="1829.00" y="1002.50" width="6.30" height="6.80" fill="rgb(242,242,242)"/>
<rect x="1835.00" y="1002.50" width="6.30" height="6.80" fill="rgb(231,231,231)"/>
<text x="1843.00" y="1002.00" font-size="28" fill="#666666" font-weight="400" text-anchor="start" textLength="66" lengthAdjust="spacingAndGlyphs" font-family="Liberation Sans">com.)</text>
</svg>
</body></html>
